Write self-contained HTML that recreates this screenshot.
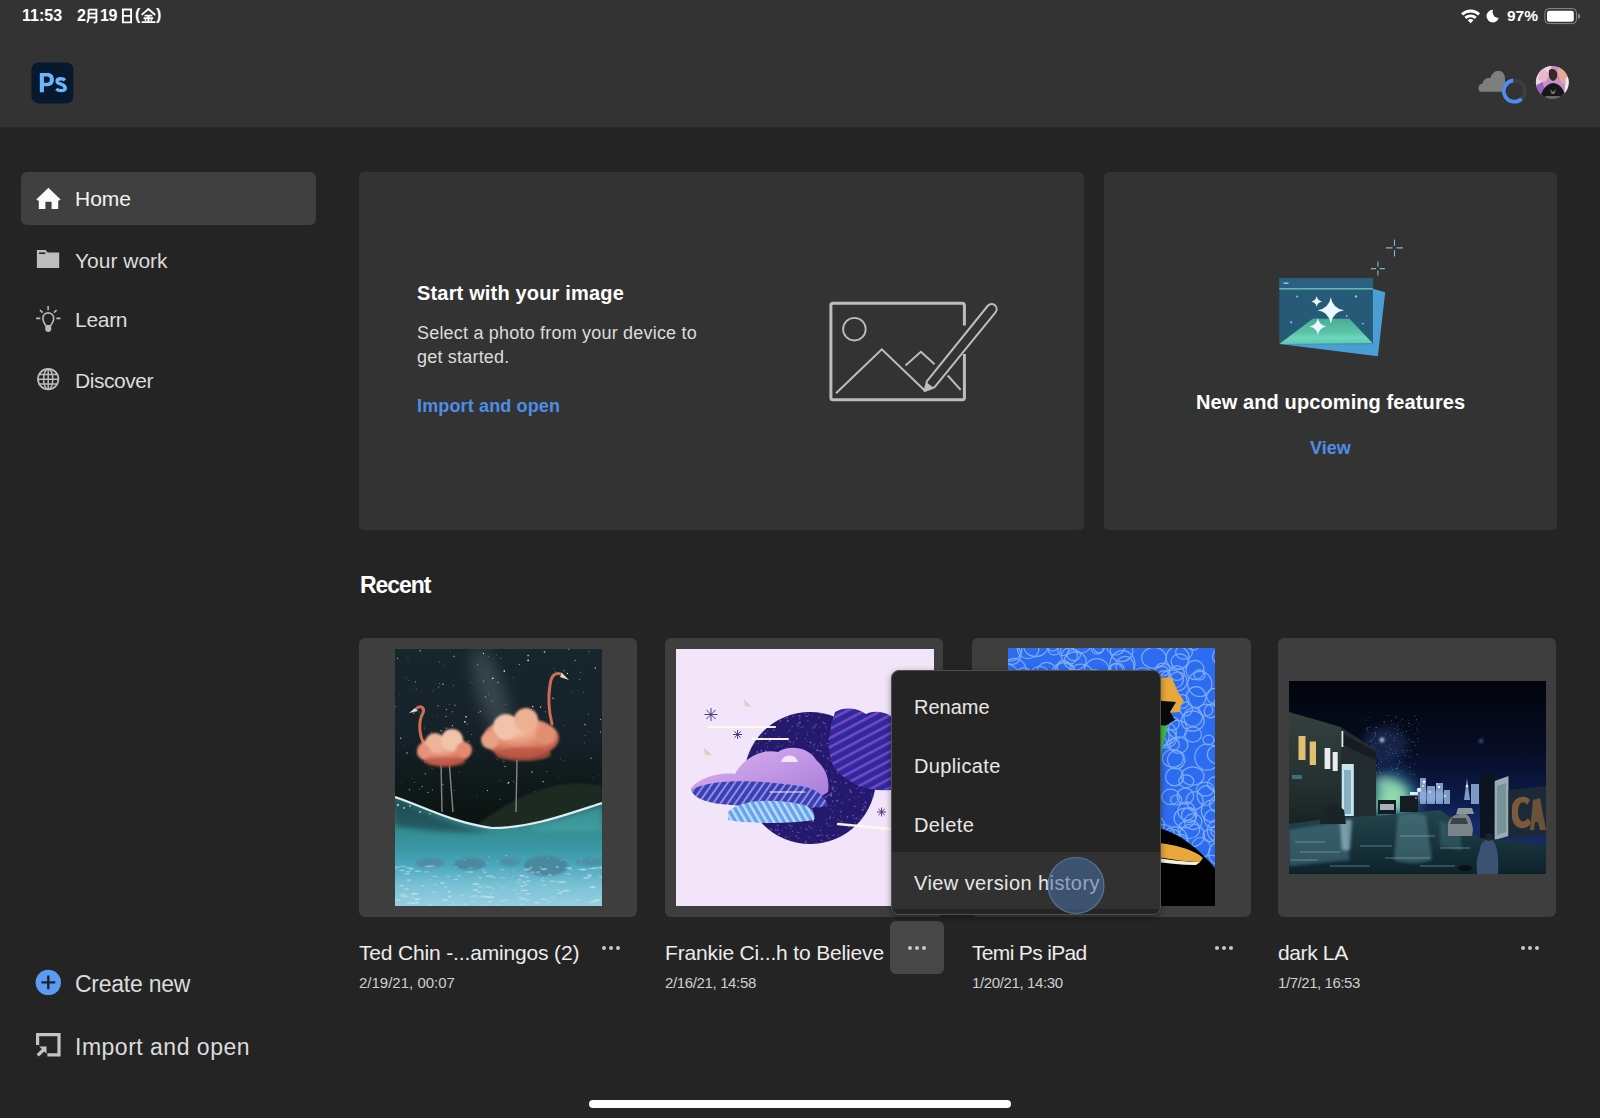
<!DOCTYPE html>
<html><head><meta charset="utf-8">
<style>
*{margin:0;padding:0;box-sizing:border-box}
html,body{width:1600px;height:1118px;overflow:hidden;background:#242424;font-family:"Liberation Sans",sans-serif;color:#e6e6e6}
.a{position:absolute}
.t{position:absolute;white-space:nowrap;line-height:1}
.card{background:#333333;border-radius:5px}
.rc{background:#3e3e3e;border-radius:6px}
.nav{font-size:21px;color:#dcdcdc}
.link{color:#4f8de6;font-weight:bold}
.dots{position:absolute;width:18px;height:4px}
.dots i{position:absolute;top:0;width:4px;height:4px;border-radius:2px;background:#c8c8c8}
</style></head><body>
<div class="a" style="left:0;top:0;width:1600px;height:126px;background:#333333"></div>
<div class="a" style="left:0;top:125px;width:1600px;height:1px;background:#383838"></div>
<div class="a" style="left:0;top:126px;width:1600px;height:1px;background:#303030"></div>
<div class="a" style="left:0;top:127px;width:1600px;height:1px;background:#282828"></div>
<!-- sidebar selected -->
<div class="a" style="left:21px;top:172px;width:295px;height:53px;background:#404040;border-radius:6px"></div>
<!-- cards -->
<div class="a card" style="left:359px;top:172px;width:725px;height:358px"></div>
<div class="a card" style="left:1104px;top:172px;width:453px;height:358px"></div>
<!-- recent cards -->
<div class="a rc" style="left:359px;top:638px;width:278px;height:279px"></div>
<div class="a rc" style="left:665px;top:638px;width:278px;height:279px"></div>
<div class="a rc" style="left:972px;top:638px;width:279px;height:279px"></div>
<div class="a rc" style="left:1278px;top:638px;width:278px;height:279px"></div>
<!-- highlighted dots button -->
<div class="a" style="left:890px;top:921px;width:54px;height:53px;background:#474747;border-radius:6px"></div>
<!-- ICONS LAYER -->
<svg class="a" style="left:0;top:0" width="1600" height="1118" viewBox="0 0 1600 1118">
 <!-- status date CJK -->
 <g stroke="#fff" stroke-width="1.9" fill="none" stroke-linecap="butt">
  <!-- 月 -->
  <path d="M88.6 9.6 V17.5 C88.6 20 88 21.6 86.9 22.6"/>
  <path d="M88.6 9.6 H96.4 V21.3 C96.4 22.2 96 22.5 95 22.5 H93.8"/>
  <path d="M88.6 13.6 H96.4 M88.6 17.5 H96.4"/>
  <!-- 日 -->
  <path d="M122.9 9.5 H131.1 V22.4 H122.9 Z M122.9 15.9 H131.1" stroke-linejoin="miter"/>
  <!-- 金 -->
  <path d="M141.6 14.9 L148.4 9.1 L155.3 14.9"/>
  <path d="M144.6 15.6 H152.3 M143.6 18.3 H153.2 M141.6 22.1 H155.4 M148.4 15.6 V22.1"/>
  <path d="M145 19.3 L146 21 M151.8 19.3 L150.8 21" stroke-width="1.4"/>
 </g>
 <!-- wifi -->
 <g fill="#fff">
  <path d="M1461.1 13.3 A13.8 13.8 0 0 1 1480.1 13.3 L1478.1 15.5 A10.8 10.8 0 0 0 1463.1 15.5 Z"/>
  <path d="M1464.4 16.8 A9.2 9.2 0 0 1 1476.8 16.8 L1474.8 19 A6.2 6.2 0 0 0 1466.4 19 Z"/>
  <path d="M1467.7 20.3 A4.4 4.4 0 0 1 1473.5 20.3 L1470.6 23.3 Z"/>
 </g>
 <!-- moon -->
 <defs><mask id="moonm"><rect x="1480" y="0" width="30" height="30" fill="#fff"/><circle cx="1498.6" cy="12" r="6" fill="#000"/></mask></defs>
 <circle cx="1492.8" cy="16.1" r="6.3" fill="#fff" mask="url(#moonm)"/>
 <!-- battery -->
 <rect x="1544.9" y="8.6" width="31.6" height="15" rx="4" fill="none" stroke="#8a8a8a" stroke-width="1"/>
 <rect x="1547" y="10.7" width="26.8" height="11" rx="2.3" fill="#fff"/>
 <path d="M1578 13.5 C1579.6 14 1580.2 15 1580.2 16.3 C1580.2 17.6 1579.6 18.6 1578 19.1 Z" fill="#8a8a8a"/>

 <!-- Ps logo -->
 <rect x="31.4" y="62.4" width="42" height="41" rx="7" fill="#07192e"/>
 <path fill="#6cb6ff" fill-rule="evenodd" d="M39.8 92.2 V73 H47.4 C51.6 73 53.9 75.6 53.9 79.6 C53.9 83.7 51.5 86.3 47.4 86.3 H43.9 V92.2 Z M43.9 76.6 V82.7 H47 C49 82.7 49.9 81.5 49.9 79.6 C49.9 77.8 49 76.6 47 76.6 Z"/>
 <path fill="none" stroke="#6cb6ff" stroke-width="3.4" d="M65 80.2 C63.8 79 62.2 78.8 60.7 78.8 C58.4 78.8 57.1 79.8 57.1 81.3 C57.1 83 58.7 83.6 61 84.2 C63.5 84.9 65.2 85.8 65.2 88.3 C65.2 90 63.6 90.6 61.2 90.6 C59.3 90.6 57.6 90.1 56.2 89"/>

 <!-- cloud -->
 <path fill="#7e7e7e" d="M1481.5 91.8 C1478.8 91.8 1478.5 89.5 1478.5 88 C1478.5 85.5 1480.3 83.7 1482.6 83.6 C1483 80.3 1485.6 78 1488.6 78 C1489.3 78 1489.9 78.1 1490.4 78.3 C1491.5 74 1494.8 70.8 1498.3 70.8 C1502.3 70.8 1505 74.2 1505 78.5 V91.8 Z"/>
 <!-- spinner -->
 <circle cx="1514.3" cy="91.1" r="10.6" fill="none" stroke="#3e3e3e" stroke-width="3.6"/>
 <path d="M1513.2 80.5 A10.6 10.6 0 1 0 1521.6 98.8" fill="none" stroke="#4b8ff0" stroke-width="3.8"/>
 <!-- avatar -->
 <defs>
  <clipPath id="avc"><circle cx="1552.3" cy="82.3" r="16.4"/></clipPath>
  <radialGradient id="avg" cx="0.5" cy="0.4" r="0.6"><stop offset="0" stop-color="#d8a0c0"/><stop offset="1" stop-color="#8a5aa0"/></radialGradient>
 </defs>
 <g clip-path="url(#avc)">
  <rect x="1535" y="65" width="36" height="36" fill="#c890c0"/>
  <path d="M1535 65 H1552 L1548 76 L1540 84 L1535 86 Z" fill="#f2d6e6"/>
  <path d="M1540 70 C1544 68 1548 70 1549 76 L1545 82 L1538 80 Z" fill="#e8b8d0"/>
  <path d="M1535 86 L1542 82 L1546 92 L1540 100 H1535 Z" fill="#9a62c0"/>
  <path d="M1558 66 C1564 68 1568 74 1569 82 L1562 84 L1558 74 Z" fill="#e4a898"/>
  <path d="M1566 78 L1570 76 V100 L1564 96 Z" fill="#f0eaf4"/>
  <path d="M1549 70 C1552 68 1556 69 1557 73 C1558 77 1556 80 1553 81 C1550 80 1548 77 1549 70 Z" fill="#3a2622"/>
  <path d="M1540 101 C1541 90 1546 84 1553 83 C1561 84 1565 90 1566 101 Z" fill="#14181c"/>
  <path d="M1550 89 L1553 92 L1556 89 L1554.5 94 H1551.5 Z" fill="#8a7050"/>
  <path d="M1546 96 L1560 96 L1562 101 H1544 Z" fill="#8a8a9a" opacity="0.7"/>
 </g>

 <!-- nav icons -->
 <path fill="#fafafa" d="M48.4 187.8 L60.6 199.4 L58.2 200.9 V209 H51.6 V201.8 H45.4 V209 H38.8 V200.9 L36.3 199.4 Z"/>
 <path fill="#bdbdbd" d="M36.9 250 H45.6 L47.7 252.5 H59.2 V268 H36.9 Z"/>
 <path d="M39 253.2 H45.4" stroke="#1e1e1e" stroke-width="1.5" fill="none"/>
 <g stroke="#bababa" stroke-width="1.6" fill="none" stroke-linecap="butt">
  <path d="M48.1 306 V310.3 M39.9 310 L42.6 312.6 M56.6 310 L54 312.6 M36.1 318.4 H40.3 M56.3 318.4 H60.5"/>
  <path d="M45.6 325.5 C44.8 323.5 42.9 322 42.9 318.4 C42.9 315 45.3 312.9 48.2 312.9 C51.1 312.9 53.7 315 53.7 318.4 C53.7 322 51.6 323.5 50.8 325.5"/>
 </g>
 <path fill="#bababa" d="M45.3 325 H51.2 V329.5 C51.2 331 49.8 332 48.2 332 C46.6 332 45.3 331 45.3 329.5 Z"/>
 <g stroke="#bdbdbd" stroke-width="1.5" fill="none">
  <circle cx="48.2" cy="379.1" r="10.2" stroke-width="1.8"/>
  <path d="M38.6 374.5 H57.8 M38 379.2 H58.4 M38.6 384 H57.8 M48.2 369 V389.3"/>
  <ellipse cx="48.2" cy="379.1" rx="4.6" ry="10.2"/>
 </g>
 <circle cx="48.3" cy="982.4" r="12.7" fill="#5b9cf0"/>
 <path d="M48.3 975.5 V989.3 M41.4 982.4 H55.2" stroke="#1b2330" stroke-width="2.4"/>
 <g fill="#c4c4c4">
  <path d="M36 1033 H60.6 V1056.5 H47.4 V1053.3 H57.4 V1036.2 H39.2 V1044.9 H36 Z"/>
  <path d="M39.2 1046.4 H46.5 V1053.7 L44.2 1051.4 L38.9 1056.6 L36.6 1054.3 L41.9 1049 Z"/>
 </g>

 <!-- card1 image icon -->
 <g stroke="#bdbdbd" fill="none">
  <path d="M964.4 325.6 V305.3 C964.4 304 963.6 303.3 962.4 303.3 H833 C831.7 303.3 830.9 304 830.9 305.3 V397.8 C830.9 399 831.7 399.8 833 399.8 H962.4 C963.6 399.8 964.4 399 964.4 397.8 V354.1" stroke-width="3"/>
  <circle cx="854.4" cy="329.2" r="11.3" stroke-width="1.8"/>
  <path d="M836 393.3 L881.8 349.4 L924.5 390.3 M905.5 365.4 L920.9 351.8 L934.6 364.2 M947.7 375.5 L960.7 389.8" stroke-width="2"/>
  <path d="M924.5 391 L927 381.2 L987.6 306 C989.6 303.6 993 303.3 995 305.2 C997.1 307 997.2 310.3 995.3 312.6 L934.6 387.2 Z" stroke-width="2" stroke-linejoin="round"/>
 </g>
 <path d="M924.5 391 L926.5 382.5 L933.5 387.5 Z" fill="#bdbdbd"/>

 <!-- features illustration -->
 <path d="M1372.9 288.8 L1385.2 292.2 L1377.9 356.2 L1279.5 344.1 Z" fill="#4a9ed6"/>
 <rect x="1279.3" y="278.3" width="93.6" height="65.8" fill="#275a77"/>
 <rect x="1279.3" y="278.3" width="93.6" height="10" fill="#2b6180"/>
 <rect x="1279.3" y="288" width="93.6" height="1.6" fill="#62b4b0"/>
 <rect x="1283.5" y="282.5" width="5" height="1.4" fill="#8fd0e8"/>
 <defs><linearGradient id="mtn" x1="0" y1="0" x2="0" y2="1"><stop offset="0" stop-color="#49ad95"/><stop offset="0.55" stop-color="#5cc3a8"/><stop offset="0.75" stop-color="#6dd6bc"/><stop offset="1" stop-color="#5ccaae"/></linearGradient></defs>
 <path d="M1312.7 318.8 H1349.5 L1372.9 343.5 L1279.3 344.1 Z" fill="url(#mtn)"/>
 <g fill="#eaf8ff">
  <path d="M1330.8 297.3 Q1332.6 308.5 1344.1 310.3 Q1332.6 312.1 1330.8 323.6 Q1329 312.1 1317.5 310.3 Q1329 308.5 1330.8 297.3 Z"/>
  <path d="M1316.7 296.1 Q1317.5 300.7 1322.1 301.5 Q1317.5 302.3 1316.7 306.9 Q1315.9 302.3 1311.3 301.5 Q1315.9 300.7 1316.7 296.1 Z"/>
  <path d="M1317.9 318.1 Q1319.1 325.4 1326.4 326.6 Q1319.1 327.8 1317.9 335.1 Q1316.7 327.8 1309.4 326.6 Q1316.7 325.4 1317.9 318.1 Z"/>
 </g>
 <g fill="#8cc8d8"><circle cx="1297.2" cy="296.4" r="1"/><circle cx="1356" cy="296.4" r="1.2"/><circle cx="1291.2" cy="322.3" r="1.1"/><circle cx="1346.7" cy="316" r="0.9"/><circle cx="1362.8" cy="323.6" r="0.9"/></g>
 <g stroke="#78bccc" stroke-width="1.1">
  <path d="M1394.5 239.4 V245.9 M1394.5 249.9 V256.4 M1386 247.9 H1392.5 M1396.5 247.9 H1403"/>
  <path d="M1377.9 261.6 V266.8 M1377.9 270.4 V275.6 M1370.9 268.6 H1376.1 M1379.7 268.6 H1384.9"/>
 </g>
</svg>
<!-- THUMBS -->
<svg class="a" style="left:395px;top:649px" width="207" height="257" viewBox="395 649 207 257">
<defs>
 <linearGradient id="t1sky" x1="0" y1="649" x2="0" y2="830" gradientUnits="userSpaceOnUse"><stop offset="0" stop-color="#17252d"/><stop offset="0.45" stop-color="#16222a"/><stop offset="0.8" stop-color="#0e1818"/><stop offset="1" stop-color="#0a1210"/></linearGradient>
 <linearGradient id="t1sea" x1="0" y1="797" x2="0" y2="906" gradientUnits="userSpaceOnUse"><stop offset="0" stop-color="#245a5e"/><stop offset="0.3" stop-color="#348c92"/><stop offset="0.48" stop-color="#3a98a6"/><stop offset="0.62" stop-color="#4aa6bc"/><stop offset="0.8" stop-color="#78c0d4"/><stop offset="1" stop-color="#96d0e0"/></linearGradient>
 <radialGradient id="t1cl" cx="0.45" cy="0.3" r="0.7"><stop offset="0" stop-color="#f6cab4"/><stop offset="0.45" stop-color="#e8967a"/><stop offset="1" stop-color="#b85040"/></radialGradient>
 <filter id="t1b1" x="-50%" y="-50%" width="200%" height="200%"><feGaussianBlur stdDeviation="1.1"/></filter>
 <filter id="t1b2" x="-50%" y="-50%" width="200%" height="200%"><feGaussianBlur stdDeviation="2.5"/></filter>
 <filter id="t1b4" x="-50%" y="-50%" width="200%" height="200%"><feGaussianBlur stdDeviation="7"/></filter>
</defs>
<rect x="395" y="649" width="207" height="257" fill="url(#t1sky)"/>
<ellipse cx="492" cy="695" rx="14" ry="50" transform="rotate(-18 492 695)" fill="#56646a" opacity="0.5" filter="url(#t1b4)"/>

<circle cx="462.0" cy="671.8" r="0.35" fill="#fff" opacity="0.44"/>
<circle cx="505.9" cy="704.2" r="0.35" fill="#fff" opacity="0.95"/>
<circle cx="439.4" cy="662.0" r="0.6" fill="#fff" opacity="0.44"/>
<circle cx="413.8" cy="713.1" r="0.8" fill="#fff" opacity="0.47"/>
<circle cx="441.2" cy="743.7" r="0.35" fill="#fff" opacity="0.75"/>
<circle cx="477.1" cy="796.4" r="0.35" fill="#fff" opacity="0.73"/>
<circle cx="422.6" cy="712.3" r="0.8" fill="#fff" opacity="0.47"/>
<circle cx="458.9" cy="772.2" r="0.4" fill="#fff" opacity="0.46"/>
<circle cx="513.2" cy="677.4" r="0.35" fill="#fff" opacity="0.73"/>
<circle cx="408.0" cy="658.0" r="0.4" fill="#fff" opacity="0.70"/>
<circle cx="505.1" cy="766.4" r="0.6" fill="#fff" opacity="0.75"/>
<circle cx="488.8" cy="694.3" r="0.4" fill="#fff" opacity="0.82"/>
<circle cx="445.5" cy="735.7" r="0.8" fill="#fff" opacity="0.70"/>
<circle cx="466.1" cy="716.8" r="0.8" fill="#fff" opacity="0.99"/>
<circle cx="419.4" cy="712.1" r="0.5" fill="#fff" opacity="0.49"/>
<circle cx="496.2" cy="654.9" r="0.35" fill="#fff" opacity="0.86"/>
<circle cx="513.6" cy="781.2" r="0.5" fill="#fff" opacity="0.60"/>
<circle cx="467.5" cy="724.0" r="0.6" fill="#fff" opacity="0.44"/>
<circle cx="414.4" cy="689.8" r="0.35" fill="#fff" opacity="0.44"/>
<circle cx="540.2" cy="746.7" r="0.6" fill="#fff" opacity="0.57"/>
<circle cx="474.9" cy="750.0" r="0.35" fill="#fff" opacity="0.96"/>
<circle cx="468.6" cy="741.2" r="0.6" fill="#fff" opacity="0.44"/>
<circle cx="554.0" cy="668.5" r="0.4" fill="#fff" opacity="0.64"/>
<circle cx="584.8" cy="724.0" r="0.4" fill="#fff" opacity="0.67"/>
<circle cx="508.7" cy="782.4" r="0.6" fill="#fff" opacity="0.92"/>
<circle cx="452.6" cy="711.7" r="0.5" fill="#fff" opacity="0.81"/>
<circle cx="473.8" cy="683.8" r="0.35" fill="#fff" opacity="0.51"/>
<circle cx="443.0" cy="684.2" r="0.6" fill="#fff" opacity="0.90"/>
<circle cx="432.7" cy="691.6" r="0.4" fill="#fff" opacity="0.65"/>
<circle cx="471.4" cy="734.5" r="0.4" fill="#fff" opacity="0.81"/>
<circle cx="501.7" cy="742.3" r="0.35" fill="#fff" opacity="0.67"/>
<circle cx="575.3" cy="792.7" r="0.8" fill="#fff" opacity="0.64"/>
<circle cx="477.6" cy="664.6" r="0.6" fill="#fff" opacity="0.44"/>
<circle cx="408.9" cy="680.5" r="0.4" fill="#fff" opacity="0.47"/>
<circle cx="519.4" cy="664.5" r="0.8" fill="#fff" opacity="0.49"/>
<circle cx="416.0" cy="703.9" r="0.35" fill="#fff" opacity="0.44"/>
<circle cx="438.0" cy="705.8" r="0.5" fill="#fff" opacity="0.97"/>
<circle cx="519.7" cy="720.6" r="0.35" fill="#fff" opacity="0.91"/>
<circle cx="600.6" cy="719.4" r="0.6" fill="#fff" opacity="0.59"/>
<circle cx="424.8" cy="762.2" r="0.5" fill="#fff" opacity="0.69"/>
<circle cx="538.3" cy="727.0" r="0.4" fill="#fff" opacity="0.97"/>
<circle cx="504.3" cy="671.1" r="0.8" fill="#fff" opacity="0.95"/>
<circle cx="551.9" cy="694.0" r="0.35" fill="#fff" opacity="0.82"/>
<circle cx="449.1" cy="704.4" r="0.4" fill="#fff" opacity="0.61"/>
<circle cx="441.1" cy="730.8" r="0.8" fill="#fff" opacity="0.60"/>
<circle cx="441.2" cy="771.5" r="0.4" fill="#fff" opacity="0.88"/>
<circle cx="564.4" cy="760.7" r="0.4" fill="#fff" opacity="0.52"/>
<circle cx="497.0" cy="759.4" r="0.35" fill="#fff" opacity="0.87"/>
<circle cx="492.8" cy="678.2" r="0.8" fill="#fff" opacity="0.97"/>
<circle cx="487.6" cy="790.5" r="0.5" fill="#fff" opacity="0.97"/>
<circle cx="470.5" cy="682.3" r="0.4" fill="#fff" opacity="0.68"/>
<circle cx="464.9" cy="721.9" r="0.8" fill="#fff" opacity="0.90"/>
<circle cx="494.3" cy="747.6" r="0.35" fill="#fff" opacity="0.90"/>
<circle cx="419.8" cy="707.7" r="0.4" fill="#fff" opacity="0.69"/>
<circle cx="432.0" cy="768.2" r="0.5" fill="#fff" opacity="0.45"/>
<circle cx="590.9" cy="758.0" r="0.6" fill="#fff" opacity="0.64"/>
<circle cx="591.0" cy="758.4" r="0.4" fill="#fff" opacity="1.00"/>
<circle cx="400.7" cy="738.2" r="0.6" fill="#fff" opacity="0.88"/>
<circle cx="425.3" cy="773.8" r="0.6" fill="#fff" opacity="0.79"/>
<circle cx="467.5" cy="731.8" r="0.4" fill="#fff" opacity="0.41"/>
<circle cx="560.5" cy="758.7" r="0.35" fill="#fff" opacity="0.72"/>
<circle cx="588.3" cy="714.5" r="0.4" fill="#fff" opacity="0.90"/>
<circle cx="438.7" cy="687.0" r="0.5" fill="#fff" opacity="0.70"/>
<circle cx="553.1" cy="698.2" r="0.8" fill="#fff" opacity="0.65"/>
<circle cx="422.1" cy="786.4" r="0.5" fill="#fff" opacity="0.94"/>
<circle cx="532.1" cy="772.1" r="0.8" fill="#fff" opacity="0.65"/>
<circle cx="585.0" cy="724.7" r="0.8" fill="#fff" opacity="0.49"/>
<circle cx="500.7" cy="780.8" r="0.4" fill="#fff" opacity="0.77"/>
<circle cx="555.6" cy="671.6" r="0.4" fill="#fff" opacity="0.68"/>
<circle cx="545.1" cy="733.0" r="0.5" fill="#fff" opacity="0.81"/>
<circle cx="504.9" cy="721.9" r="0.35" fill="#fff" opacity="0.93"/>
<circle cx="406.8" cy="677.9" r="0.35" fill="#fff" opacity="0.86"/>
<circle cx="500.1" cy="733.8" r="0.35" fill="#fff" opacity="0.67"/>
<circle cx="521.8" cy="725.3" r="0.8" fill="#fff" opacity="0.52"/>
<circle cx="452.4" cy="725.7" r="0.6" fill="#fff" opacity="0.70"/>
<circle cx="446.3" cy="728.0" r="0.5" fill="#fff" opacity="0.95"/>
<circle cx="579.8" cy="679.6" r="0.6" fill="#fff" opacity="0.48"/>
<circle cx="420.2" cy="715.8" r="0.35" fill="#fff" opacity="0.80"/>
<circle cx="483.7" cy="681.1" r="0.5" fill="#fff" opacity="0.87"/>
<circle cx="580.7" cy="672.3" r="0.5" fill="#fff" opacity="0.49"/>
<circle cx="577.7" cy="795.1" r="0.4" fill="#fff" opacity="0.85"/>
<circle cx="414.5" cy="782.6" r="0.4" fill="#fff" opacity="0.99"/>
<circle cx="567.3" cy="673.4" r="0.6" fill="#fff" opacity="1.00"/>
<circle cx="478.6" cy="712.6" r="0.5" fill="#fff" opacity="0.59"/>
<circle cx="544.5" cy="651.9" r="0.8" fill="#fff" opacity="0.68"/>
<circle cx="540.6" cy="707.0" r="0.8" fill="#fff" opacity="0.77"/>
<circle cx="501.0" cy="658.7" r="0.4" fill="#fff" opacity="0.98"/>
<circle cx="416.7" cy="689.1" r="0.35" fill="#fff" opacity="0.94"/>
<circle cx="432.6" cy="763.1" r="0.6" fill="#fff" opacity="0.91"/>
<circle cx="534.9" cy="791.8" r="0.6" fill="#fff" opacity="0.49"/>
<circle cx="585.3" cy="735.2" r="0.5" fill="#fff" opacity="0.45"/>
<circle cx="406.9" cy="752.9" r="0.6" fill="#fff" opacity="0.94"/>
<circle cx="450.7" cy="651.5" r="0.35" fill="#fff" opacity="0.88"/>
<circle cx="412.3" cy="778.3" r="0.35" fill="#fff" opacity="0.56"/>
<circle cx="420.2" cy="650.7" r="0.8" fill="#fff" opacity="0.65"/>
<circle cx="584.5" cy="742.9" r="0.35" fill="#fff" opacity="0.72"/>
<circle cx="444.4" cy="665.5" r="0.4" fill="#fff" opacity="0.56"/>
<circle cx="432.5" cy="789.8" r="0.5" fill="#fff" opacity="0.72"/>
<circle cx="437.6" cy="716.3" r="0.4" fill="#fff" opacity="0.56"/>
<circle cx="561.4" cy="799.2" r="0.35" fill="#fff" opacity="0.41"/>
<circle cx="546.7" cy="732.2" r="0.4" fill="#fff" opacity="0.71"/>
<circle cx="445.9" cy="716.5" r="0.6" fill="#fff" opacity="0.79"/>
<circle cx="508.0" cy="783.2" r="0.8" fill="#fff" opacity="0.58"/>
<circle cx="439.5" cy="683.7" r="0.4" fill="#fff" opacity="0.90"/>
<circle cx="541.3" cy="745.0" r="0.6" fill="#fff" opacity="0.99"/>
<circle cx="598.2" cy="775.4" r="0.35" fill="#fff" opacity="0.44"/>
<circle cx="548.4" cy="687.6" r="0.4" fill="#fff" opacity="0.43"/>
<circle cx="532.7" cy="706.5" r="0.8" fill="#fff" opacity="0.80"/>
<circle cx="453.4" cy="685.6" r="0.5" fill="#fff" opacity="0.43"/>
<circle cx="433.4" cy="689.6" r="0.35" fill="#fff" opacity="0.56"/>
<circle cx="594.1" cy="795.9" r="0.8" fill="#fff" opacity="0.59"/>
<circle cx="402.1" cy="782.2" r="0.4" fill="#fff" opacity="0.61"/>
<circle cx="395.2" cy="706.6" r="0.6" fill="#fff" opacity="0.57"/>
<circle cx="530.8" cy="686.5" r="0.35" fill="#fff" opacity="0.45"/>
<circle cx="564.1" cy="670.7" r="0.8" fill="#fff" opacity="0.43"/>
<circle cx="399.7" cy="694.9" r="0.4" fill="#fff" opacity="0.45"/>
<circle cx="593.2" cy="777.8" r="0.4" fill="#fff" opacity="0.79"/>
<circle cx="543.2" cy="781.7" r="0.6" fill="#fff" opacity="0.86"/>
<circle cx="544.2" cy="723.6" r="0.5" fill="#fff" opacity="0.83"/>
<circle cx="528.1" cy="655.6" r="0.8" fill="#fff" opacity="0.78"/>
<circle cx="546.9" cy="771.6" r="0.4" fill="#fff" opacity="0.95"/>
<circle cx="550.8" cy="734.8" r="0.35" fill="#fff" opacity="0.90"/>
<circle cx="515.9" cy="783.8" r="0.4" fill="#fff" opacity="0.45"/>
<circle cx="403.7" cy="745.2" r="0.35" fill="#fff" opacity="0.63"/>
<circle cx="488.4" cy="656.7" r="0.35" fill="#fff" opacity="0.78"/>
<circle cx="535.9" cy="722.9" r="0.35" fill="#fff" opacity="0.67"/>
<circle cx="409.5" cy="789.8" r="0.8" fill="#fff" opacity="0.46"/>
<circle cx="503.9" cy="761.6" r="0.6" fill="#fff" opacity="0.55"/>
<circle cx="410.4" cy="689.1" r="0.4" fill="#fff" opacity="0.54"/>
<circle cx="529.5" cy="718.5" r="0.6" fill="#fff" opacity="0.45"/>
<circle cx="583.5" cy="692.4" r="0.35" fill="#fff" opacity="0.77"/>
<circle cx="528.1" cy="660.7" r="0.4" fill="#fff" opacity="0.60"/>
<circle cx="529.9" cy="753.6" r="0.8" fill="#fff" opacity="0.74"/>
<circle cx="397.6" cy="658.2" r="0.5" fill="#fff" opacity="0.98"/>
<circle cx="415.6" cy="681.9" r="0.6" fill="#fff" opacity="0.57"/>
<circle cx="501.9" cy="719.2" r="0.6" fill="#fff" opacity="0.86"/>
<circle cx="600.6" cy="731.9" r="0.5" fill="#fff" opacity="0.99"/>
<circle cx="588.8" cy="651.6" r="0.6" fill="#fff" opacity="0.45"/>
<circle cx="499.9" cy="799.2" r="0.5" fill="#fff" opacity="0.63"/>
<circle cx="584.7" cy="789.5" r="0.35" fill="#fff" opacity="0.75"/>
<circle cx="424.3" cy="728.1" r="0.5" fill="#fff" opacity="0.48"/>
<circle cx="564.8" cy="725.8" r="0.35" fill="#fff" opacity="0.82"/>
<circle cx="442.9" cy="784.6" r="0.6" fill="#fff" opacity="0.64"/>
<circle cx="427.9" cy="792.4" r="0.6" fill="#fff" opacity="0.64"/>
<circle cx="545.5" cy="711.8" r="0.6" fill="#fff" opacity="0.59"/>
<circle cx="568.9" cy="649.3" r="0.5" fill="#fff" opacity="0.90"/>
<circle cx="419.8" cy="788.9" r="0.35" fill="#fff" opacity="0.94"/>
<circle cx="455.0" cy="705.2" r="0.6" fill="#fff" opacity="0.63"/>
<circle cx="575.1" cy="660.5" r="0.6" fill="#fff" opacity="0.85"/>
<circle cx="571.8" cy="691.4" r="0.35" fill="#fff" opacity="0.90"/>
<circle cx="454.1" cy="790.3" r="0.4" fill="#fff" opacity="0.98"/>
<circle cx="485.3" cy="696.7" r="0.5" fill="#fff" opacity="0.87"/>
<circle cx="483.5" cy="653.4" r="0.6" fill="#fff" opacity="0.95"/>
<circle cx="589.7" cy="731.9" r="0.35" fill="#fff" opacity="0.43"/>
<circle cx="546.6" cy="717.1" r="0.4" fill="#fff" opacity="0.79"/>
<circle cx="454.2" cy="656.4" r="0.8" fill="#fff" opacity="0.48"/>
<circle cx="492.7" cy="700.9" r="0.5" fill="#fff" opacity="0.55"/>
<circle cx="547.9" cy="747.6" r="0.6" fill="#fff" opacity="0.79"/>
<circle cx="457.3" cy="733.2" r="0.6" fill="#fff" opacity="0.47"/>
<circle cx="528.1" cy="660.4" r="0.8" fill="#fff" opacity="0.94"/>
<circle cx="497.9" cy="682.2" r="0.5" fill="#fff" opacity="1.00"/>
<circle cx="488.1" cy="670.1" r="0.4" fill="#fff" opacity="0.55"/>
<circle cx="431.2" cy="732.9" r="0.5" fill="#fff" opacity="0.54"/>
<circle cx="448.5" cy="735.0" r="0.35" fill="#fff" opacity="0.85"/>
<circle cx="480.4" cy="711.5" r="0.8" fill="#fff" opacity="0.53"/>
<circle cx="450.9" cy="762.6" r="0.6" fill="#fff" opacity="0.57"/>
<circle cx="595.3" cy="668.0" r="0.8" fill="#fff" opacity="0.72"/>
<circle cx="558.6" cy="777.1" r="0.35" fill="#fff" opacity="0.56"/>
<circle cx="446.4" cy="709.4" r="0.6" fill="#fff" opacity="0.66"/>
<circle cx="459.6" cy="772.0" r="0.35" fill="#fff" opacity="0.48"/>

<path d="M480 822 C505 805 530 790 560 785 C580 782 595 784 602 786 V830 H480 Z" fill="#1c2a22" filter="url(#t1b1)"/>
<path d="M395 797 C420 805 450 822 492 828 C530 828 565 815 602 803 V906 H395 Z" fill="url(#t1sea)"/>
<path d="M395 800 C420 810 450 826 492 831 C470 834 430 832 395 826 Z" fill="#14383e" opacity="0.55" filter="url(#t1b2)"/>
<path d="M530 826 C555 822 580 812 602 806 V830 C580 832 555 832 530 830 Z" fill="#4ab0b0" opacity="0.5" filter="url(#t1b2)"/>
<path d="M395 797 C420 805 450 822 492 828 C530 828 565 815 602 803" fill="none" stroke="#dceeee" stroke-width="2.2"/>
<g fill="#d8eef0" opacity="0.7"><circle cx="398" cy="805" r="1.2"/><circle cx="404" cy="808" r="1"/><circle cx="410" cy="806" r="0.9"/><circle cx="420" cy="812" r="1"/><circle cx="430" cy="814" r="0.8"/></g>
<g filter="url(#t1b1)" opacity="0.85">
 <ellipse cx="430" cy="863" rx="14" ry="5" fill="#4f8aa0"/>
 <ellipse cx="470" cy="864" rx="16" ry="6" fill="#4a8498"/>
 <ellipse cx="510" cy="862" rx="10" ry="4" fill="#508ca0"/>
 <ellipse cx="546" cy="866" rx="22" ry="10" fill="#4a8498"/>
 <ellipse cx="590" cy="862" rx="14" ry="4" fill="#508ca0"/>
</g>

<ellipse cx="483.0" cy="896.5" rx="3.5" ry="1.2" fill="#d4f0f6" opacity="0.37"/>
<ellipse cx="410.1" cy="903.2" rx="3.8" ry="0.9" fill="#d4f0f6" opacity="0.36"/>
<ellipse cx="487.9" cy="897.3" rx="2.1" ry="0.7" fill="#d4f0f6" opacity="0.54"/>
<ellipse cx="417.5" cy="899.0" rx="3.3" ry="1.1" fill="#d4f0f6" opacity="0.51"/>
<ellipse cx="412.6" cy="897.1" rx="1.5" ry="0.7" fill="#d4f0f6" opacity="0.40"/>
<ellipse cx="402.8" cy="894.6" rx="3.9" ry="1.0" fill="#d4f0f6" opacity="0.38"/>
<ellipse cx="485.5" cy="896.6" rx="1.7" ry="0.8" fill="#d4f0f6" opacity="0.53"/>
<ellipse cx="434.7" cy="876.4" rx="3.5" ry="0.6" fill="#d4f0f6" opacity="0.39"/>
<ellipse cx="601.2" cy="877.1" rx="2.3" ry="1.1" fill="#d4f0f6" opacity="0.28"/>
<ellipse cx="503.9" cy="887.9" rx="1.6" ry="0.8" fill="#d4f0f6" opacity="0.43"/>
<ellipse cx="406.4" cy="873.8" rx="3.7" ry="1.0" fill="#d4f0f6" opacity="0.23"/>
<ellipse cx="442.2" cy="883.0" rx="2.4" ry="0.9" fill="#d4f0f6" opacity="0.44"/>
<ellipse cx="543.7" cy="880.5" rx="2.5" ry="0.6" fill="#d4f0f6" opacity="0.30"/>
<ellipse cx="569.9" cy="868.7" rx="2.7" ry="0.7" fill="#d4f0f6" opacity="0.47"/>
<ellipse cx="435.1" cy="884.6" rx="2.2" ry="1.1" fill="#d4f0f6" opacity="0.24"/>
<ellipse cx="524.1" cy="890.4" rx="3.7" ry="0.9" fill="#d4f0f6" opacity="0.52"/>
<ellipse cx="406.7" cy="889.8" rx="3.8" ry="0.6" fill="#d4f0f6" opacity="0.21"/>
<ellipse cx="518.4" cy="882.6" rx="3.3" ry="0.7" fill="#d4f0f6" opacity="0.36"/>
<ellipse cx="542.4" cy="878.6" rx="1.8" ry="0.6" fill="#d4f0f6" opacity="0.26"/>
<ellipse cx="434.5" cy="892.1" rx="2.8" ry="0.9" fill="#d4f0f6" opacity="0.31"/>
<ellipse cx="545.2" cy="899.6" rx="4.0" ry="0.9" fill="#d4f0f6" opacity="0.24"/>
<ellipse cx="411.2" cy="869.2" rx="2.6" ry="1.1" fill="#d4f0f6" opacity="0.40"/>
<ellipse cx="552.1" cy="881.2" rx="3.4" ry="0.8" fill="#d4f0f6" opacity="0.48"/>
<ellipse cx="413.2" cy="894.2" rx="2.0" ry="0.9" fill="#d4f0f6" opacity="0.36"/>
<ellipse cx="461.9" cy="895.5" rx="2.7" ry="1.0" fill="#d4f0f6" opacity="0.29"/>
<ellipse cx="524.5" cy="882.2" rx="2.4" ry="0.9" fill="#d4f0f6" opacity="0.48"/>
<ellipse cx="407.8" cy="873.8" rx="1.7" ry="1.0" fill="#d4f0f6" opacity="0.33"/>
<ellipse cx="464.3" cy="904.2" rx="1.6" ry="1.0" fill="#d4f0f6" opacity="0.44"/>
<ellipse cx="586.3" cy="877.9" rx="3.3" ry="1.0" fill="#d4f0f6" opacity="0.48"/>
<ellipse cx="590.9" cy="868.6" rx="3.6" ry="0.7" fill="#d4f0f6" opacity="0.45"/>
<ellipse cx="491.4" cy="897.1" rx="3.5" ry="1.1" fill="#d4f0f6" opacity="0.49"/>
<ellipse cx="422.5" cy="885.9" rx="1.5" ry="1.2" fill="#d4f0f6" opacity="0.31"/>
<ellipse cx="538.3" cy="872.1" rx="2.1" ry="1.1" fill="#d4f0f6" opacity="0.36"/>
<ellipse cx="557.3" cy="889.8" rx="2.8" ry="0.8" fill="#d4f0f6" opacity="0.26"/>
<ellipse cx="479.4" cy="892.0" rx="2.7" ry="0.9" fill="#d4f0f6" opacity="0.26"/>
<ellipse cx="483.3" cy="870.2" rx="1.7" ry="1.0" fill="#d4f0f6" opacity="0.27"/>
<ellipse cx="482.2" cy="905.5" rx="3.9" ry="0.7" fill="#d4f0f6" opacity="0.25"/>
<ellipse cx="490.4" cy="901.7" rx="2.1" ry="0.9" fill="#d4f0f6" opacity="0.47"/>
<ellipse cx="552.2" cy="897.2" rx="2.2" ry="0.8" fill="#d4f0f6" opacity="0.29"/>
<ellipse cx="447.6" cy="876.4" rx="2.6" ry="0.7" fill="#d4f0f6" opacity="0.28"/>
<ellipse cx="453.2" cy="902.3" rx="2.0" ry="0.6" fill="#d4f0f6" opacity="0.29"/>
<ellipse cx="445.9" cy="887.1" rx="3.1" ry="0.7" fill="#d4f0f6" opacity="0.36"/>
<ellipse cx="402.7" cy="866.2" rx="3.7" ry="0.7" fill="#d4f0f6" opacity="0.36"/>
<ellipse cx="472.4" cy="901.1" rx="2.1" ry="0.6" fill="#d4f0f6" opacity="0.41"/>
<ellipse cx="566.4" cy="873.8" rx="1.7" ry="0.9" fill="#d4f0f6" opacity="0.26"/>
<ellipse cx="519.8" cy="897.0" rx="3.2" ry="0.6" fill="#d4f0f6" opacity="0.42"/>
<ellipse cx="541.9" cy="880.0" rx="1.6" ry="0.8" fill="#d4f0f6" opacity="0.22"/>
<ellipse cx="602.0" cy="867.5" rx="3.3" ry="1.1" fill="#d4f0f6" opacity="0.49"/>
<ellipse cx="564.5" cy="882.4" rx="2.4" ry="1.0" fill="#d4f0f6" opacity="0.23"/>
<ellipse cx="401.5" cy="885.8" rx="2.7" ry="0.8" fill="#d4f0f6" opacity="0.48"/>
<ellipse cx="532.5" cy="872.2" rx="2.8" ry="1.0" fill="#d4f0f6" opacity="0.34"/>
<ellipse cx="451.1" cy="905.5" rx="3.2" ry="0.9" fill="#d4f0f6" opacity="0.22"/>
<ellipse cx="549.3" cy="901.3" rx="2.5" ry="0.6" fill="#d4f0f6" opacity="0.47"/>
<ellipse cx="561.1" cy="891.8" rx="2.5" ry="0.8" fill="#d4f0f6" opacity="0.53"/>
<ellipse cx="484.9" cy="872.3" rx="1.8" ry="0.7" fill="#d4f0f6" opacity="0.40"/>
<ellipse cx="470.5" cy="896.9" rx="1.8" ry="0.6" fill="#d4f0f6" opacity="0.25"/>
<ellipse cx="561.9" cy="881.9" rx="2.9" ry="1.2" fill="#d4f0f6" opacity="0.46"/>
<ellipse cx="430.5" cy="879.9" rx="1.9" ry="0.7" fill="#d4f0f6" opacity="0.22"/>
<ellipse cx="474.4" cy="896.1" rx="3.5" ry="1.1" fill="#d4f0f6" opacity="0.31"/>
<ellipse cx="568.3" cy="867.7" rx="3.8" ry="0.8" fill="#d4f0f6" opacity="0.41"/>
<ellipse cx="526.7" cy="869.5" rx="3.3" ry="1.0" fill="#d4f0f6" opacity="0.51"/>
<ellipse cx="527.5" cy="900.3" rx="3.1" ry="1.0" fill="#d4f0f6" opacity="0.27"/>
<ellipse cx="492.9" cy="888.6" rx="1.6" ry="1.2" fill="#d4f0f6" opacity="0.25"/>
<ellipse cx="469.4" cy="872.0" rx="3.9" ry="1.1" fill="#d4f0f6" opacity="0.27"/>
<ellipse cx="578.0" cy="899.7" rx="3.2" ry="1.0" fill="#d4f0f6" opacity="0.31"/>
<ellipse cx="475.7" cy="884.2" rx="3.6" ry="1.1" fill="#d4f0f6" opacity="0.43"/>
<ellipse cx="458.8" cy="876.0" rx="2.5" ry="0.8" fill="#d4f0f6" opacity="0.38"/>
<ellipse cx="432.0" cy="866.1" rx="4.0" ry="0.9" fill="#d4f0f6" opacity="0.36"/>
<ellipse cx="523.0" cy="898.8" rx="3.6" ry="1.1" fill="#d4f0f6" opacity="0.34"/>
<ellipse cx="408.9" cy="880.3" rx="2.4" ry="1.1" fill="#d4f0f6" opacity="0.38"/>
<ellipse cx="531.0" cy="867.6" rx="1.8" ry="1.2" fill="#d4f0f6" opacity="0.31"/>
<ellipse cx="544.1" cy="869.2" rx="3.4" ry="1.1" fill="#d4f0f6" opacity="0.43"/>
<ellipse cx="557.3" cy="867.0" rx="1.7" ry="1.0" fill="#d4f0f6" opacity="0.44"/>
<ellipse cx="417.7" cy="871.3" rx="3.7" ry="0.8" fill="#d4f0f6" opacity="0.48"/>
<ellipse cx="559.6" cy="893.4" rx="3.3" ry="0.7" fill="#d4f0f6" opacity="0.49"/>
<ellipse cx="521.4" cy="876.1" rx="2.3" ry="1.0" fill="#d4f0f6" opacity="0.52"/>
<ellipse cx="489.5" cy="876.2" rx="3.9" ry="0.9" fill="#d4f0f6" opacity="0.41"/>
<ellipse cx="522.5" cy="875.5" rx="2.4" ry="0.7" fill="#d4f0f6" opacity="0.34"/>
<ellipse cx="526.8" cy="877.1" rx="2.3" ry="0.8" fill="#d4f0f6" opacity="0.48"/>
<ellipse cx="449.7" cy="896.7" rx="1.6" ry="1.1" fill="#d4f0f6" opacity="0.54"/>
<ellipse cx="488.8" cy="886.9" rx="3.2" ry="1.1" fill="#d4f0f6" opacity="0.29"/>
<ellipse cx="505.9" cy="900.3" rx="3.3" ry="0.8" fill="#d4f0f6" opacity="0.33"/>
<ellipse cx="471.4" cy="871.8" rx="2.3" ry="0.6" fill="#d4f0f6" opacity="0.28"/>
<ellipse cx="522.4" cy="904.3" rx="2.2" ry="0.9" fill="#d4f0f6" opacity="0.31"/>
<ellipse cx="595.0" cy="900.8" rx="3.8" ry="1.1" fill="#d4f0f6" opacity="0.46"/>
<ellipse cx="549.7" cy="874.9" rx="2.2" ry="1.0" fill="#d4f0f6" opacity="0.35"/>
<ellipse cx="470.4" cy="867.9" rx="2.7" ry="1.0" fill="#d4f0f6" opacity="0.22"/>
<ellipse cx="406.3" cy="888.7" rx="2.3" ry="0.9" fill="#d4f0f6" opacity="0.39"/>
<ellipse cx="480.5" cy="878.0" rx="1.8" ry="0.8" fill="#d4f0f6" opacity="0.49"/>
<ellipse cx="427.8" cy="866.6" rx="3.5" ry="1.0" fill="#d4f0f6" opacity="0.36"/>
<ellipse cx="408.2" cy="871.8" rx="3.2" ry="0.8" fill="#d4f0f6" opacity="0.48"/>
<ellipse cx="595.2" cy="868.2" rx="3.6" ry="1.1" fill="#d4f0f6" opacity="0.41"/>
<ellipse cx="514.7" cy="890.1" rx="2.8" ry="0.9" fill="#d4f0f6" opacity="0.26"/>
<ellipse cx="395.1" cy="868.5" rx="1.6" ry="0.7" fill="#d4f0f6" opacity="0.26"/>
<ellipse cx="583.7" cy="870.2" rx="3.0" ry="1.0" fill="#d4f0f6" opacity="0.27"/>
<ellipse cx="480.5" cy="886.7" rx="3.1" ry="1.0" fill="#d4f0f6" opacity="0.35"/>
<ellipse cx="521.9" cy="886.3" rx="1.7" ry="1.0" fill="#d4f0f6" opacity="0.55"/>
<ellipse cx="544.9" cy="885.1" rx="2.8" ry="0.8" fill="#d4f0f6" opacity="0.35"/>
<ellipse cx="583.8" cy="869.2" rx="3.1" ry="0.7" fill="#d4f0f6" opacity="0.55"/>
<ellipse cx="449.1" cy="891.8" rx="1.8" ry="1.1" fill="#d4f0f6" opacity="0.52"/>
<ellipse cx="590.2" cy="876.5" rx="1.6" ry="1.0" fill="#d4f0f6" opacity="0.44"/>
<ellipse cx="536.9" cy="902.7" rx="3.9" ry="0.8" fill="#d4f0f6" opacity="0.52"/>
<ellipse cx="580.1" cy="869.4" rx="2.8" ry="0.7" fill="#d4f0f6" opacity="0.52"/>
<ellipse cx="569.2" cy="874.1" rx="1.9" ry="1.1" fill="#d4f0f6" opacity="0.27"/>
<ellipse cx="475.5" cy="890.0" rx="2.4" ry="1.1" fill="#d4f0f6" opacity="0.52"/>
<ellipse cx="598.2" cy="899.7" rx="2.8" ry="0.9" fill="#d4f0f6" opacity="0.39"/>
<ellipse cx="396.3" cy="867.1" rx="3.9" ry="0.7" fill="#d4f0f6" opacity="0.51"/>
<ellipse cx="558.4" cy="881.7" rx="3.0" ry="0.9" fill="#d4f0f6" opacity="0.26"/>
<ellipse cx="401.8" cy="870.5" rx="3.1" ry="0.7" fill="#d4f0f6" opacity="0.54"/>
<ellipse cx="540.1" cy="867.2" rx="1.8" ry="1.0" fill="#d4f0f6" opacity="0.21"/>
<ellipse cx="409.0" cy="867.9" rx="3.6" ry="1.1" fill="#d4f0f6" opacity="0.27"/>
<ellipse cx="592.6" cy="887.4" rx="3.2" ry="1.1" fill="#d4f0f6" opacity="0.46"/>
<ellipse cx="542.2" cy="881.4" rx="2.1" ry="0.7" fill="#d4f0f6" opacity="0.21"/>
<ellipse cx="591.5" cy="902.4" rx="3.4" ry="0.7" fill="#d4f0f6" opacity="0.46"/>
<ellipse cx="525.9" cy="885.1" rx="1.8" ry="1.1" fill="#d4f0f6" opacity="0.43"/>
<ellipse cx="456.0" cy="879.5" rx="2.2" ry="0.8" fill="#d4f0f6" opacity="0.53"/>
<ellipse cx="405.0" cy="896.4" rx="3.8" ry="1.1" fill="#d4f0f6" opacity="0.41"/>
<ellipse cx="493.5" cy="877.5" rx="3.4" ry="1.1" fill="#d4f0f6" opacity="0.21"/>
<ellipse cx="502.4" cy="869.9" rx="2.7" ry="0.6" fill="#d4f0f6" opacity="0.40"/>
<ellipse cx="542.9" cy="899.1" rx="2.9" ry="0.8" fill="#d4f0f6" opacity="0.35"/>
<ellipse cx="503.4" cy="877.5" rx="3.4" ry="0.6" fill="#d4f0f6" opacity="0.32"/>
<ellipse cx="414.8" cy="893.8" rx="3.6" ry="1.2" fill="#d4f0f6" opacity="0.41"/>
<ellipse cx="593.1" cy="886.6" rx="2.9" ry="0.7" fill="#d4f0f6" opacity="0.49"/>
<ellipse cx="589.2" cy="875.3" rx="1.9" ry="1.2" fill="#d4f0f6" opacity="0.47"/>
<ellipse cx="496.5" cy="905.6" rx="2.9" ry="0.7" fill="#d4f0f6" opacity="0.31"/>
<ellipse cx="414.7" cy="903.1" rx="3.7" ry="1.0" fill="#d4f0f6" opacity="0.35"/>
<ellipse cx="528.7" cy="880.9" rx="2.3" ry="0.9" fill="#d4f0f6" opacity="0.39"/>
<ellipse cx="430.4" cy="905.3" rx="3.1" ry="1.2" fill="#d4f0f6" opacity="0.24"/>
<ellipse cx="518.0" cy="893.6" rx="3.0" ry="0.6" fill="#d4f0f6" opacity="0.40"/>
<ellipse cx="503.0" cy="900.7" rx="2.6" ry="0.9" fill="#d4f0f6" opacity="0.31"/>
<ellipse cx="490.9" cy="893.6" rx="2.1" ry="0.7" fill="#d4f0f6" opacity="0.32"/>
<ellipse cx="528.0" cy="893.9" rx="2.8" ry="0.8" fill="#d4f0f6" opacity="0.46"/>
<ellipse cx="566.1" cy="890.7" rx="3.3" ry="1.2" fill="#d4f0f6" opacity="0.45"/>
<ellipse cx="519.8" cy="879.9" rx="2.1" ry="1.2" fill="#d4f0f6" opacity="0.29"/>
<ellipse cx="592.7" cy="905.8" rx="1.9" ry="1.0" fill="#d4f0f6" opacity="0.27"/>
<ellipse cx="426.2" cy="871.9" rx="2.3" ry="0.8" fill="#d4f0f6" opacity="0.30"/>
<ellipse cx="417.6" cy="902.5" rx="2.2" ry="1.1" fill="#d4f0f6" opacity="0.36"/>
<ellipse cx="397.6" cy="900.2" rx="2.6" ry="0.7" fill="#d4f0f6" opacity="0.54"/>
<ellipse cx="456.3" cy="866.9" rx="2.1" ry="1.0" fill="#d4f0f6" opacity="0.20"/>
<ellipse cx="445.2" cy="900.1" rx="3.3" ry="1.0" fill="#d4f0f6" opacity="0.43"/>
<circle cx="572.3" cy="870.4" r="0.7" fill="#a8d0dc" opacity="0.56"/>
<circle cx="578.0" cy="869.8" r="0.7" fill="#a8d0dc" opacity="0.53"/>
<circle cx="461.1" cy="859.2" r="0.7" fill="#a8d0dc" opacity="0.35"/>
<circle cx="497.9" cy="861.0" r="0.7" fill="#a8d0dc" opacity="0.58"/>
<circle cx="581.1" cy="860.6" r="0.7" fill="#a8d0dc" opacity="0.46"/>
<circle cx="548.3" cy="858.6" r="0.7" fill="#a8d0dc" opacity="0.64"/>
<circle cx="506.9" cy="855.5" r="0.7" fill="#a8d0dc" opacity="0.64"/>
<circle cx="513.3" cy="870.2" r="0.7" fill="#a8d0dc" opacity="0.65"/>
<circle cx="581.0" cy="862.5" r="0.7" fill="#a8d0dc" opacity="0.30"/>
<circle cx="569.7" cy="875.9" r="0.7" fill="#a8d0dc" opacity="0.34"/>
<circle cx="465.2" cy="860.0" r="0.7" fill="#a8d0dc" opacity="0.59"/>
<circle cx="591.2" cy="859.6" r="0.7" fill="#a8d0dc" opacity="0.44"/>
<circle cx="572.5" cy="865.5" r="0.7" fill="#a8d0dc" opacity="0.38"/>
<circle cx="505.6" cy="855.4" r="0.7" fill="#a8d0dc" opacity="0.62"/>
<circle cx="486.6" cy="862.9" r="0.7" fill="#a8d0dc" opacity="0.60"/>
<circle cx="502.2" cy="877.8" r="0.7" fill="#a8d0dc" opacity="0.37"/>
<circle cx="512.5" cy="876.5" r="0.7" fill="#a8d0dc" opacity="0.59"/>
<circle cx="530.5" cy="869.7" r="0.7" fill="#a8d0dc" opacity="0.40"/>
<circle cx="488.7" cy="856.4" r="0.7" fill="#a8d0dc" opacity="0.33"/>
<circle cx="584.8" cy="869.5" r="0.7" fill="#a8d0dc" opacity="0.57"/>
<circle cx="524.4" cy="857.5" r="0.7" fill="#a8d0dc" opacity="0.42"/>
<circle cx="492.1" cy="876.9" r="0.7" fill="#a8d0dc" opacity="0.69"/>
<circle cx="599.0" cy="877.1" r="0.7" fill="#a8d0dc" opacity="0.48"/>
<circle cx="449.6" cy="876.4" r="0.7" fill="#a8d0dc" opacity="0.33"/>
<circle cx="563.7" cy="859.4" r="0.7" fill="#a8d0dc" opacity="0.56"/>
<circle cx="549.7" cy="873.7" r="0.7" fill="#a8d0dc" opacity="0.36"/>
<circle cx="539.9" cy="874.1" r="0.7" fill="#a8d0dc" opacity="0.62"/>
<circle cx="494.4" cy="877.9" r="0.7" fill="#a8d0dc" opacity="0.60"/>
<circle cx="536.9" cy="872.9" r="0.7" fill="#a8d0dc" opacity="0.49"/>
<circle cx="561.0" cy="860.3" r="0.7" fill="#a8d0dc" opacity="0.58"/>
<circle cx="543.7" cy="877.6" r="0.7" fill="#a8d0dc" opacity="0.57"/>
<circle cx="506.7" cy="873.5" r="0.7" fill="#a8d0dc" opacity="0.62"/>
<circle cx="484.4" cy="870.1" r="0.7" fill="#a8d0dc" opacity="0.43"/>
<circle cx="507.3" cy="869.3" r="0.7" fill="#a8d0dc" opacity="0.33"/>
<circle cx="581.5" cy="858.5" r="0.7" fill="#a8d0dc" opacity="0.42"/>
<circle cx="489.3" cy="857.0" r="0.7" fill="#a8d0dc" opacity="0.53"/>
<circle cx="478.4" cy="876.7" r="0.7" fill="#a8d0dc" opacity="0.51"/>
<circle cx="482.1" cy="868.4" r="0.7" fill="#a8d0dc" opacity="0.56"/>
<circle cx="457.8" cy="856.7" r="0.7" fill="#a8d0dc" opacity="0.42"/>
<circle cx="529.5" cy="868.3" r="0.7" fill="#a8d0dc" opacity="0.64"/>

<g stroke="#9a9a90" stroke-width="1.4" fill="none" opacity="0.85">
 <path d="M441 760 L442 812 M449 760 L453 812 M517 760 L516 812"/>
</g>
<g stroke="#d06c52" stroke-width="3" fill="none" stroke-linecap="round">
 <path d="M424 744 C418 732 419 720 423 713 C425 708 421 705 417 708"/>
 <path d="M552 724 C549 712 548 697 550 685 C551 676 555 672 561 674"/>
</g>
<path d="M415 708 L409 713 L418 711 Z M562 673 L569 680 L560 677 Z" fill="#e8e0d0"/>
<g filter="url(#t1b1)">
 <ellipse cx="444" cy="751" rx="27" ry="15" fill="url(#t1cl)"/>
 <circle cx="435" cy="743" r="10" fill="#eeb49a"/>
 <circle cx="452" cy="740" r="11" fill="#f2c2aa"/>
 <circle cx="464" cy="750" r="8" fill="#e28a70"/>
 <circle cx="424" cy="752" r="7" fill="#e4927a"/>
 <ellipse cx="521" cy="738" rx="38" ry="20" fill="url(#t1cl)"/>
 <circle cx="506" cy="727" r="13" fill="#f2c2aa"/>
 <circle cx="526" cy="720" r="12" fill="#ecb092"/>
 <circle cx="546" cy="735" r="10" fill="#e28e70"/>
 <circle cx="490" cy="740" r="9" fill="#e8a084"/>
 <ellipse cx="523" cy="754" rx="28" ry="7" fill="#bc5444" opacity="0.75"/>
 <ellipse cx="445" cy="762" rx="20" ry="5" fill="#bc5444" opacity="0.65"/>
</g>
</svg>
<svg class="a" style="left:676px;top:649px" width="258" height="257" viewBox="676 649 258 257">
<defs>
 <linearGradient id="t2cl" x1="0" y1="0" x2="1" y2="1"><stop offset="0" stop-color="#e0b4f2"/><stop offset="1" stop-color="#a47ad8"/></linearGradient>
 <linearGradient id="t2rc" x1="0" y1="0" x2="1" y2="1"><stop offset="0" stop-color="#3526a8"/><stop offset="1" stop-color="#7a3cc8"/></linearGradient>
 <pattern id="t2str" width="6" height="6" patternUnits="userSpaceOnUse" patternTransform="rotate(35)"><rect width="6" height="6" fill="#3d3fb0"/><rect width="2" height="6" fill="#8b8ee8"/></pattern>
 <pattern id="t2str2" width="6" height="6" patternUnits="userSpaceOnUse" patternTransform="rotate(-30)"><rect width="6" height="6" fill="#6aa0ec"/><rect width="2.5" height="6" fill="#b8e0fa"/></pattern>
 <pattern id="t2str3" width="8" height="8" patternUnits="userSpaceOnUse" patternTransform="rotate(62)"><rect width="8" height="8" fill="#2f2a9c"/><rect width="2.5" height="8" fill="#7a46c8"/></pattern>
 <clipPath id="t2cc"><circle cx="810" cy="778" r="66"/></clipPath>
</defs>
<rect x="676" y="649" width="258" height="257" fill="#f2e5fa"/>
<circle cx="810" cy="778" r="66" fill="#25196e"/>
<g clip-path="url(#t2cc)">
<circle cx="768.5" cy="771.7" r="0.6" fill="#7a6cd0" opacity="0.50"/>
<circle cx="797.1" cy="782.6" r="0.5" fill="#7a6cd0" opacity="0.73"/>
<circle cx="862.0" cy="816.0" r="0.8" fill="#7a6cd0" opacity="0.50"/>
<circle cx="835.4" cy="782.1" r="1.0" fill="#7a6cd0" opacity="0.74"/>
<circle cx="759.4" cy="727.6" r="1.0" fill="#7a6cd0" opacity="0.52"/>
<circle cx="762.4" cy="777.1" r="0.5" fill="#7a6cd0" opacity="0.64"/>
<circle cx="863.5" cy="804.5" r="0.6" fill="#7a6cd0" opacity="0.65"/>
<circle cx="815.2" cy="825.9" r="0.5" fill="#7a6cd0" opacity="0.48"/>
<circle cx="786.3" cy="803.9" r="1.0" fill="#7a6cd0" opacity="0.73"/>
<circle cx="855.0" cy="761.5" r="1.0" fill="#7a6cd0" opacity="0.90"/>
<circle cx="833.2" cy="735.8" r="0.8" fill="#7a6cd0" opacity="0.72"/>
<circle cx="747.8" cy="792.5" r="0.8" fill="#7a6cd0" opacity="0.80"/>
<circle cx="756.4" cy="775.9" r="0.6" fill="#7a6cd0" opacity="0.42"/>
<circle cx="838.8" cy="794.5" r="0.8" fill="#7a6cd0" opacity="0.45"/>
<circle cx="831.0" cy="757.1" r="0.6" fill="#7a6cd0" opacity="0.54"/>
<circle cx="789.1" cy="745.2" r="0.5" fill="#7a6cd0" opacity="0.81"/>
<circle cx="782.7" cy="821.3" r="1.0" fill="#7a6cd0" opacity="0.57"/>
<circle cx="873.9" cy="827.2" r="0.8" fill="#7a6cd0" opacity="0.89"/>
<circle cx="830.4" cy="816.5" r="0.8" fill="#7a6cd0" opacity="0.50"/>
<circle cx="838.1" cy="728.8" r="0.5" fill="#7a6cd0" opacity="0.79"/>
<circle cx="749.3" cy="807.4" r="1.0" fill="#7a6cd0" opacity="0.67"/>
<circle cx="750.6" cy="751.7" r="0.5" fill="#7a6cd0" opacity="0.42"/>
<circle cx="852.5" cy="774.7" r="0.5" fill="#7a6cd0" opacity="0.79"/>
<circle cx="864.1" cy="792.7" r="0.6" fill="#7a6cd0" opacity="0.71"/>
<circle cx="835.9" cy="790.7" r="0.5" fill="#7a6cd0" opacity="0.51"/>
<circle cx="832.0" cy="772.4" r="0.6" fill="#7a6cd0" opacity="0.45"/>
<circle cx="767.9" cy="716.9" r="0.5" fill="#7a6cd0" opacity="0.86"/>
<circle cx="830.6" cy="760.7" r="0.6" fill="#7a6cd0" opacity="0.79"/>
<circle cx="818.2" cy="746.1" r="0.8" fill="#7a6cd0" opacity="0.49"/>
<circle cx="748.5" cy="714.7" r="0.5" fill="#7a6cd0" opacity="0.65"/>
<circle cx="812.9" cy="820.9" r="1.0" fill="#7a6cd0" opacity="0.69"/>
<circle cx="865.3" cy="770.9" r="0.5" fill="#7a6cd0" opacity="0.74"/>
<circle cx="822.4" cy="843.1" r="0.6" fill="#7a6cd0" opacity="0.64"/>
<circle cx="798.4" cy="725.5" r="1.0" fill="#7a6cd0" opacity="0.51"/>
<circle cx="764.0" cy="714.0" r="0.5" fill="#7a6cd0" opacity="0.40"/>
<circle cx="832.4" cy="842.2" r="0.5" fill="#7a6cd0" opacity="0.51"/>
<circle cx="760.0" cy="774.3" r="0.8" fill="#7a6cd0" opacity="0.76"/>
<circle cx="776.0" cy="808.8" r="0.6" fill="#7a6cd0" opacity="0.86"/>
<circle cx="792.3" cy="810.6" r="0.6" fill="#7a6cd0" opacity="0.76"/>
<circle cx="755.1" cy="795.0" r="1.0" fill="#7a6cd0" opacity="0.63"/>
<circle cx="867.1" cy="745.5" r="0.5" fill="#7a6cd0" opacity="0.76"/>
<circle cx="745.5" cy="713.9" r="0.5" fill="#7a6cd0" opacity="0.59"/>
<circle cx="785.2" cy="791.2" r="1.0" fill="#7a6cd0" opacity="0.70"/>
<circle cx="785.7" cy="837.2" r="1.0" fill="#7a6cd0" opacity="0.63"/>
<circle cx="766.0" cy="839.6" r="0.5" fill="#7a6cd0" opacity="0.58"/>
<circle cx="829.1" cy="795.1" r="1.0" fill="#7a6cd0" opacity="0.64"/>
<circle cx="846.7" cy="771.8" r="0.8" fill="#7a6cd0" opacity="0.79"/>
<circle cx="818.8" cy="750.6" r="0.5" fill="#7a6cd0" opacity="0.71"/>
<circle cx="829.9" cy="817.9" r="0.8" fill="#7a6cd0" opacity="0.83"/>
<circle cx="839.8" cy="714.0" r="0.6" fill="#7a6cd0" opacity="0.70"/>
<circle cx="784.7" cy="768.6" r="0.6" fill="#7a6cd0" opacity="0.59"/>
<circle cx="834.4" cy="791.4" r="0.6" fill="#7a6cd0" opacity="0.80"/>
<circle cx="781.4" cy="712.2" r="0.8" fill="#7a6cd0" opacity="0.53"/>
<circle cx="764.8" cy="833.5" r="0.5" fill="#7a6cd0" opacity="0.54"/>
<circle cx="762.6" cy="829.6" r="0.6" fill="#7a6cd0" opacity="0.54"/>
<circle cx="856.4" cy="818.5" r="1.0" fill="#7a6cd0" opacity="0.57"/>
<circle cx="755.2" cy="785.1" r="1.0" fill="#7a6cd0" opacity="0.50"/>
<circle cx="843.0" cy="835.0" r="0.6" fill="#7a6cd0" opacity="0.55"/>
<circle cx="751.6" cy="764.2" r="0.6" fill="#7a6cd0" opacity="0.86"/>
<circle cx="821.4" cy="713.2" r="1.0" fill="#7a6cd0" opacity="0.63"/>
<circle cx="755.6" cy="818.5" r="0.5" fill="#7a6cd0" opacity="0.52"/>
<circle cx="820.5" cy="830.4" r="0.8" fill="#7a6cd0" opacity="0.64"/>
<circle cx="821.8" cy="737.0" r="0.6" fill="#7a6cd0" opacity="0.45"/>
<circle cx="850.4" cy="750.3" r="0.8" fill="#7a6cd0" opacity="0.60"/>
<circle cx="812.3" cy="731.7" r="0.5" fill="#7a6cd0" opacity="0.86"/>
<circle cx="809.1" cy="826.4" r="0.8" fill="#7a6cd0" opacity="0.72"/>
<circle cx="847.9" cy="732.6" r="0.5" fill="#7a6cd0" opacity="0.57"/>
<circle cx="812.6" cy="714.7" r="0.5" fill="#7a6cd0" opacity="0.50"/>
<circle cx="858.9" cy="786.6" r="0.6" fill="#7a6cd0" opacity="0.53"/>
<circle cx="846.9" cy="768.2" r="1.0" fill="#7a6cd0" opacity="0.78"/>
<circle cx="852.1" cy="839.2" r="0.8" fill="#7a6cd0" opacity="0.82"/>
<circle cx="788.7" cy="843.3" r="1.0" fill="#7a6cd0" opacity="0.44"/>
<circle cx="750.7" cy="785.6" r="1.0" fill="#7a6cd0" opacity="0.64"/>
<circle cx="855.6" cy="830.1" r="1.0" fill="#7a6cd0" opacity="0.86"/>
<circle cx="837.2" cy="723.9" r="0.8" fill="#7a6cd0" opacity="0.68"/>
<circle cx="828.6" cy="838.2" r="1.0" fill="#7a6cd0" opacity="0.49"/>
<circle cx="856.2" cy="761.0" r="0.6" fill="#7a6cd0" opacity="0.90"/>
<circle cx="773.3" cy="717.1" r="0.8" fill="#7a6cd0" opacity="0.87"/>
<circle cx="751.8" cy="785.0" r="0.5" fill="#7a6cd0" opacity="0.82"/>
<circle cx="750.2" cy="815.8" r="1.0" fill="#7a6cd0" opacity="0.43"/>
<circle cx="763.1" cy="811.7" r="0.6" fill="#7a6cd0" opacity="0.74"/>
<circle cx="783.4" cy="790.1" r="0.5" fill="#7a6cd0" opacity="0.64"/>
<circle cx="793.1" cy="763.5" r="0.8" fill="#7a6cd0" opacity="0.64"/>
<circle cx="766.3" cy="743.5" r="0.6" fill="#7a6cd0" opacity="0.86"/>
<circle cx="861.8" cy="773.8" r="0.6" fill="#7a6cd0" opacity="0.80"/>
<circle cx="764.7" cy="821.9" r="0.5" fill="#7a6cd0" opacity="0.87"/>
<circle cx="858.4" cy="829.3" r="0.6" fill="#7a6cd0" opacity="0.79"/>
<circle cx="870.4" cy="834.2" r="1.0" fill="#7a6cd0" opacity="0.82"/>
<circle cx="826.9" cy="771.7" r="0.8" fill="#7a6cd0" opacity="0.56"/>
<circle cx="774.9" cy="727.3" r="0.8" fill="#7a6cd0" opacity="0.47"/>
<circle cx="773.3" cy="719.5" r="1.0" fill="#7a6cd0" opacity="0.68"/>
<circle cx="763.1" cy="826.9" r="0.8" fill="#7a6cd0" opacity="0.61"/>
<circle cx="776.6" cy="715.4" r="0.8" fill="#7a6cd0" opacity="0.57"/>
<circle cx="766.1" cy="776.8" r="0.8" fill="#7a6cd0" opacity="0.63"/>
<circle cx="807.7" cy="732.2" r="0.5" fill="#7a6cd0" opacity="0.72"/>
<circle cx="848.0" cy="834.1" r="1.0" fill="#7a6cd0" opacity="0.82"/>
<circle cx="759.7" cy="811.6" r="0.8" fill="#7a6cd0" opacity="0.62"/>
<circle cx="778.5" cy="743.5" r="0.6" fill="#7a6cd0" opacity="0.45"/>
<circle cx="782.2" cy="830.3" r="0.5" fill="#7a6cd0" opacity="0.82"/>
<circle cx="873.2" cy="731.1" r="0.5" fill="#7a6cd0" opacity="0.62"/>
<circle cx="811.0" cy="779.4" r="1.0" fill="#7a6cd0" opacity="0.40"/>
<circle cx="853.9" cy="781.5" r="0.6" fill="#7a6cd0" opacity="0.58"/>
<circle cx="749.4" cy="766.0" r="0.8" fill="#7a6cd0" opacity="0.69"/>
<circle cx="762.2" cy="735.8" r="0.6" fill="#7a6cd0" opacity="0.76"/>
<circle cx="770.0" cy="722.5" r="0.5" fill="#7a6cd0" opacity="0.84"/>
<circle cx="840.5" cy="812.5" r="0.6" fill="#7a6cd0" opacity="0.50"/>
<circle cx="824.8" cy="805.4" r="0.6" fill="#7a6cd0" opacity="0.69"/>
<circle cx="770.7" cy="720.7" r="1.0" fill="#7a6cd0" opacity="0.82"/>
<circle cx="864.9" cy="780.4" r="0.8" fill="#7a6cd0" opacity="0.57"/>
<circle cx="855.1" cy="826.1" r="1.0" fill="#7a6cd0" opacity="0.45"/>
<circle cx="798.1" cy="812.7" r="0.6" fill="#7a6cd0" opacity="0.84"/>
<circle cx="779.1" cy="736.6" r="0.8" fill="#7a6cd0" opacity="0.42"/>
<circle cx="836.7" cy="787.9" r="0.5" fill="#7a6cd0" opacity="0.58"/>
<circle cx="867.0" cy="839.9" r="0.5" fill="#7a6cd0" opacity="0.46"/>
<circle cx="838.3" cy="819.8" r="0.8" fill="#7a6cd0" opacity="0.79"/>
<circle cx="858.6" cy="788.1" r="0.5" fill="#7a6cd0" opacity="0.55"/>
<circle cx="758.2" cy="808.5" r="1.0" fill="#7a6cd0" opacity="0.66"/>
<circle cx="814.0" cy="782.9" r="0.5" fill="#7a6cd0" opacity="0.52"/>
<circle cx="755.7" cy="793.7" r="0.6" fill="#7a6cd0" opacity="0.45"/>
<circle cx="777.1" cy="819.9" r="0.5" fill="#7a6cd0" opacity="0.41"/>
<circle cx="866.3" cy="809.5" r="0.8" fill="#7a6cd0" opacity="0.41"/>
<circle cx="823.1" cy="788.1" r="0.6" fill="#7a6cd0" opacity="0.75"/>
<circle cx="757.6" cy="826.8" r="0.6" fill="#7a6cd0" opacity="0.42"/>
<circle cx="760.2" cy="777.2" r="0.8" fill="#7a6cd0" opacity="0.46"/>
<circle cx="760.0" cy="828.7" r="0.6" fill="#7a6cd0" opacity="0.83"/>
<circle cx="763.4" cy="787.6" r="1.0" fill="#7a6cd0" opacity="0.48"/>
<circle cx="853.0" cy="835.8" r="1.0" fill="#7a6cd0" opacity="0.75"/>
<circle cx="822.8" cy="791.6" r="0.5" fill="#7a6cd0" opacity="0.60"/>
<circle cx="868.3" cy="814.6" r="0.8" fill="#7a6cd0" opacity="0.60"/>
<circle cx="854.7" cy="806.4" r="0.8" fill="#7a6cd0" opacity="0.81"/>
<circle cx="855.9" cy="719.1" r="0.6" fill="#7a6cd0" opacity="0.88"/>
<circle cx="867.3" cy="744.9" r="1.0" fill="#7a6cd0" opacity="0.73"/>
<circle cx="745.5" cy="726.4" r="0.6" fill="#7a6cd0" opacity="0.43"/>
<circle cx="801.2" cy="778.6" r="0.5" fill="#7a6cd0" opacity="0.51"/>
<circle cx="799.5" cy="764.4" r="1.0" fill="#7a6cd0" opacity="0.72"/>
<circle cx="850.8" cy="828.7" r="0.5" fill="#7a6cd0" opacity="0.42"/>
<circle cx="828.7" cy="747.1" r="0.8" fill="#7a6cd0" opacity="0.71"/>
<circle cx="850.4" cy="716.7" r="0.5" fill="#7a6cd0" opacity="0.53"/>
<circle cx="812.7" cy="769.2" r="0.5" fill="#7a6cd0" opacity="0.54"/>
<circle cx="784.3" cy="797.5" r="0.5" fill="#7a6cd0" opacity="0.43"/>
<circle cx="870.6" cy="833.6" r="0.8" fill="#7a6cd0" opacity="0.44"/>
<circle cx="821.9" cy="835.0" r="1.0" fill="#7a6cd0" opacity="0.46"/>
<circle cx="761.3" cy="750.8" r="1.0" fill="#7a6cd0" opacity="0.69"/>
<circle cx="780.2" cy="809.1" r="0.8" fill="#7a6cd0" opacity="0.82"/>
<circle cx="824.5" cy="787.3" r="1.0" fill="#7a6cd0" opacity="0.50"/>
<circle cx="837.8" cy="772.8" r="0.8" fill="#7a6cd0" opacity="0.71"/>
<circle cx="805.9" cy="753.0" r="0.6" fill="#7a6cd0" opacity="0.57"/>
<circle cx="768.9" cy="784.1" r="1.0" fill="#7a6cd0" opacity="0.41"/>
<circle cx="790.6" cy="825.8" r="0.6" fill="#7a6cd0" opacity="0.56"/>
<circle cx="787.0" cy="747.6" r="0.6" fill="#7a6cd0" opacity="0.55"/>
<circle cx="845.9" cy="732.9" r="0.5" fill="#7a6cd0" opacity="0.70"/>
<circle cx="789.9" cy="798.8" r="1.0" fill="#7a6cd0" opacity="0.82"/>
<circle cx="790.7" cy="812.7" r="0.6" fill="#7a6cd0" opacity="0.89"/>
<circle cx="833.5" cy="835.3" r="1.0" fill="#7a6cd0" opacity="0.57"/>
<circle cx="790.5" cy="801.1" r="0.8" fill="#7a6cd0" opacity="0.81"/>
<circle cx="812.3" cy="809.5" r="1.0" fill="#7a6cd0" opacity="0.53"/>
<circle cx="827.2" cy="795.4" r="0.6" fill="#7a6cd0" opacity="0.61"/>
<circle cx="757.6" cy="766.2" r="0.5" fill="#7a6cd0" opacity="0.65"/>
<circle cx="871.1" cy="787.5" r="1.0" fill="#7a6cd0" opacity="0.82"/>
<circle cx="780.9" cy="794.0" r="0.5" fill="#7a6cd0" opacity="0.59"/>
<circle cx="803.7" cy="772.4" r="0.8" fill="#7a6cd0" opacity="0.55"/>
<circle cx="795.6" cy="785.3" r="1.0" fill="#7a6cd0" opacity="0.72"/>
<circle cx="744.9" cy="810.4" r="1.0" fill="#7a6cd0" opacity="0.59"/>
<circle cx="783.6" cy="782.9" r="0.6" fill="#7a6cd0" opacity="0.62"/>
<circle cx="793.8" cy="742.6" r="0.8" fill="#7a6cd0" opacity="0.56"/>
<circle cx="855.3" cy="822.6" r="0.8" fill="#7a6cd0" opacity="0.50"/>
<circle cx="800.3" cy="832.2" r="0.5" fill="#7a6cd0" opacity="0.41"/>
<circle cx="777.9" cy="830.3" r="0.8" fill="#7a6cd0" opacity="0.86"/>
<circle cx="846.1" cy="783.1" r="1.0" fill="#7a6cd0" opacity="0.66"/>
<circle cx="812.3" cy="802.5" r="1.0" fill="#7a6cd0" opacity="0.63"/>
<circle cx="749.4" cy="801.3" r="1.0" fill="#7a6cd0" opacity="0.87"/>
<circle cx="833.3" cy="781.3" r="0.5" fill="#7a6cd0" opacity="0.60"/>
<circle cx="810.1" cy="797.6" r="0.6" fill="#7a6cd0" opacity="0.84"/>
<circle cx="871.3" cy="776.2" r="1.0" fill="#7a6cd0" opacity="0.78"/>
<circle cx="862.7" cy="789.5" r="0.5" fill="#7a6cd0" opacity="0.49"/>
<circle cx="786.0" cy="841.2" r="0.8" fill="#7a6cd0" opacity="0.66"/>
<circle cx="758.6" cy="830.1" r="0.8" fill="#7a6cd0" opacity="0.81"/>
<circle cx="874.7" cy="829.2" r="1.0" fill="#7a6cd0" opacity="0.72"/>
<circle cx="813.2" cy="819.7" r="0.6" fill="#7a6cd0" opacity="0.65"/>
<circle cx="768.8" cy="736.1" r="0.5" fill="#7a6cd0" opacity="0.58"/>
<circle cx="875.2" cy="796.0" r="0.5" fill="#7a6cd0" opacity="0.75"/>
<circle cx="745.4" cy="712.4" r="0.5" fill="#7a6cd0" opacity="0.86"/>
<circle cx="796.5" cy="725.0" r="0.5" fill="#7a6cd0" opacity="0.73"/>
<circle cx="770.0" cy="777.7" r="0.8" fill="#7a6cd0" opacity="0.84"/>
<circle cx="862.2" cy="779.9" r="0.6" fill="#7a6cd0" opacity="0.69"/>
<circle cx="798.3" cy="728.0" r="0.6" fill="#7a6cd0" opacity="0.66"/>
<circle cx="811.3" cy="715.8" r="0.5" fill="#7a6cd0" opacity="0.49"/>
<circle cx="813.0" cy="820.7" r="1.0" fill="#7a6cd0" opacity="0.80"/>
<circle cx="752.2" cy="713.6" r="0.8" fill="#7a6cd0" opacity="0.47"/>
<circle cx="775.5" cy="748.4" r="0.5" fill="#7a6cd0" opacity="0.53"/>
<circle cx="757.1" cy="831.3" r="0.5" fill="#7a6cd0" opacity="0.57"/>
<circle cx="803.4" cy="762.9" r="0.5" fill="#7a6cd0" opacity="0.51"/>
<circle cx="796.3" cy="812.9" r="0.5" fill="#7a6cd0" opacity="0.62"/>
<circle cx="825.9" cy="744.9" r="0.5" fill="#7a6cd0" opacity="0.48"/>
<circle cx="821.5" cy="734.9" r="0.5" fill="#7a6cd0" opacity="0.85"/>
<circle cx="851.7" cy="752.1" r="0.8" fill="#7a6cd0" opacity="0.88"/>
<circle cx="809.4" cy="837.4" r="0.6" fill="#7a6cd0" opacity="0.74"/>
<circle cx="833.1" cy="789.2" r="1.0" fill="#7a6cd0" opacity="0.55"/>
<circle cx="859.5" cy="775.9" r="0.6" fill="#7a6cd0" opacity="0.44"/>
<circle cx="766.4" cy="762.0" r="0.5" fill="#7a6cd0" opacity="0.89"/>
<circle cx="782.4" cy="786.1" r="0.5" fill="#7a6cd0" opacity="0.57"/>
<circle cx="859.0" cy="756.3" r="0.5" fill="#7a6cd0" opacity="0.88"/>
<circle cx="799.7" cy="832.5" r="0.6" fill="#7a6cd0" opacity="0.59"/>
<circle cx="805.6" cy="757.5" r="1.0" fill="#7a6cd0" opacity="0.42"/>
<circle cx="831.7" cy="757.1" r="0.6" fill="#7a6cd0" opacity="0.52"/>
<circle cx="761.1" cy="737.9" r="0.6" fill="#7a6cd0" opacity="0.68"/>
<circle cx="805.7" cy="816.9" r="0.6" fill="#7a6cd0" opacity="0.48"/>
<circle cx="790.6" cy="807.4" r="1.0" fill="#7a6cd0" opacity="0.71"/>
<circle cx="820.7" cy="751.2" r="1.0" fill="#7a6cd0" opacity="0.65"/>
<circle cx="774.0" cy="771.8" r="0.6" fill="#7a6cd0" opacity="0.87"/>
<circle cx="875.7" cy="790.7" r="1.0" fill="#7a6cd0" opacity="0.69"/>
<circle cx="792.6" cy="744.5" r="0.6" fill="#7a6cd0" opacity="0.46"/>
<circle cx="843.1" cy="801.5" r="0.5" fill="#7a6cd0" opacity="0.67"/>
<circle cx="779.7" cy="813.9" r="1.0" fill="#7a6cd0" opacity="0.41"/>
<circle cx="838.8" cy="731.1" r="0.5" fill="#7a6cd0" opacity="0.59"/>
<circle cx="755.4" cy="735.4" r="0.6" fill="#7a6cd0" opacity="0.56"/>
<circle cx="831.5" cy="726.4" r="0.8" fill="#7a6cd0" opacity="0.80"/>
<circle cx="844.1" cy="737.5" r="0.8" fill="#7a6cd0" opacity="0.44"/>
<circle cx="782.1" cy="819.8" r="1.0" fill="#7a6cd0" opacity="0.54"/>
<circle cx="797.2" cy="832.0" r="0.6" fill="#7a6cd0" opacity="0.87"/>
<circle cx="767.3" cy="760.4" r="0.8" fill="#7a6cd0" opacity="0.85"/>
<circle cx="747.3" cy="804.9" r="1.0" fill="#7a6cd0" opacity="0.52"/>
<circle cx="855.8" cy="758.5" r="0.5" fill="#7a6cd0" opacity="0.49"/>
<circle cx="759.2" cy="832.5" r="0.6" fill="#7a6cd0" opacity="0.76"/>
<circle cx="749.3" cy="717.3" r="0.6" fill="#7a6cd0" opacity="0.62"/>
<circle cx="843.9" cy="732.6" r="0.5" fill="#7a6cd0" opacity="0.68"/>
<circle cx="827.1" cy="836.3" r="0.6" fill="#7a6cd0" opacity="0.69"/>
<circle cx="838.6" cy="745.6" r="1.0" fill="#7a6cd0" opacity="0.74"/>
<circle cx="819.9" cy="835.5" r="0.5" fill="#7a6cd0" opacity="0.82"/>
<circle cx="846.5" cy="749.8" r="0.5" fill="#7a6cd0" opacity="0.84"/>
<circle cx="821.2" cy="803.9" r="0.6" fill="#7a6cd0" opacity="0.74"/>
<circle cx="748.9" cy="754.0" r="0.8" fill="#7a6cd0" opacity="0.77"/>
<circle cx="755.4" cy="803.7" r="1.0" fill="#7a6cd0" opacity="0.90"/>
<circle cx="825.2" cy="741.1" r="0.5" fill="#7a6cd0" opacity="0.57"/>
<circle cx="869.3" cy="770.4" r="0.8" fill="#7a6cd0" opacity="0.75"/>
<circle cx="841.5" cy="821.6" r="1.0" fill="#7a6cd0" opacity="0.65"/>
<circle cx="833.3" cy="739.2" r="0.6" fill="#7a6cd0" opacity="0.64"/>
<circle cx="769.0" cy="837.7" r="0.8" fill="#7a6cd0" opacity="0.49"/>
<circle cx="765.6" cy="815.1" r="0.6" fill="#7a6cd0" opacity="0.67"/>
<circle cx="777.0" cy="719.8" r="0.8" fill="#7a6cd0" opacity="0.57"/>
<circle cx="756.2" cy="796.0" r="0.6" fill="#7a6cd0" opacity="0.47"/>
<circle cx="837.3" cy="800.5" r="0.6" fill="#7a6cd0" opacity="0.75"/>
<circle cx="744.8" cy="803.3" r="0.6" fill="#7a6cd0" opacity="0.87"/>
<circle cx="790.4" cy="751.5" r="0.6" fill="#7a6cd0" opacity="0.69"/>
<circle cx="775.8" cy="795.1" r="0.5" fill="#7a6cd0" opacity="0.67"/>
<circle cx="844.4" cy="734.3" r="0.6" fill="#7a6cd0" opacity="0.70"/>
<circle cx="804.9" cy="813.1" r="0.6" fill="#7a6cd0" opacity="0.46"/>
<circle cx="782.2" cy="759.6" r="0.6" fill="#7a6cd0" opacity="0.42"/>
<circle cx="862.2" cy="752.1" r="0.5" fill="#7a6cd0" opacity="0.75"/>
<circle cx="803.1" cy="726.9" r="0.8" fill="#7a6cd0" opacity="0.62"/>
<circle cx="819.1" cy="750.2" r="0.5" fill="#7a6cd0" opacity="0.42"/>
<circle cx="805.8" cy="841.3" r="1.0" fill="#7a6cd0" opacity="0.44"/>
<circle cx="838.7" cy="841.4" r="0.8" fill="#7a6cd0" opacity="0.45"/>
<circle cx="808.5" cy="769.3" r="0.6" fill="#7a6cd0" opacity="0.79"/>
<circle cx="786.5" cy="759.4" r="0.5" fill="#7a6cd0" opacity="0.72"/>
<circle cx="826.9" cy="835.5" r="0.8" fill="#7a6cd0" opacity="0.73"/>
<circle cx="754.3" cy="810.7" r="0.5" fill="#7a6cd0" opacity="0.79"/>
<circle cx="854.8" cy="751.1" r="0.6" fill="#7a6cd0" opacity="0.88"/>
<circle cx="813.4" cy="830.2" r="0.6" fill="#7a6cd0" opacity="0.45"/>
<circle cx="838.9" cy="753.0" r="0.8" fill="#7a6cd0" opacity="0.59"/>
<circle cx="829.4" cy="759.0" r="0.6" fill="#7a6cd0" opacity="0.58"/>
<circle cx="816.7" cy="760.7" r="0.8" fill="#7a6cd0" opacity="0.52"/>
<circle cx="749.4" cy="786.8" r="1.0" fill="#7a6cd0" opacity="0.85"/>
<circle cx="868.7" cy="777.3" r="1.0" fill="#7a6cd0" opacity="0.77"/>
<circle cx="875.4" cy="791.5" r="0.5" fill="#7a6cd0" opacity="0.47"/>
<circle cx="774.0" cy="730.3" r="1.0" fill="#7a6cd0" opacity="0.44"/>
<circle cx="749.3" cy="770.0" r="0.6" fill="#7a6cd0" opacity="0.51"/>
<circle cx="793.2" cy="716.2" r="1.0" fill="#7a6cd0" opacity="0.47"/>
<circle cx="753.5" cy="719.3" r="1.0" fill="#7a6cd0" opacity="0.85"/>
<circle cx="752.3" cy="713.2" r="0.6" fill="#7a6cd0" opacity="0.85"/>
<circle cx="765.7" cy="751.0" r="1.0" fill="#7a6cd0" opacity="0.80"/>
<circle cx="833.1" cy="786.9" r="1.0" fill="#7a6cd0" opacity="0.44"/>
<circle cx="786.7" cy="772.8" r="0.6" fill="#7a6cd0" opacity="0.89"/>
<circle cx="871.0" cy="793.8" r="0.5" fill="#7a6cd0" opacity="0.76"/>
<circle cx="787.8" cy="798.9" r="1.0" fill="#7a6cd0" opacity="0.88"/>
<circle cx="807.5" cy="797.5" r="0.8" fill="#7a6cd0" opacity="0.83"/>
<circle cx="814.0" cy="795.7" r="0.6" fill="#7a6cd0" opacity="0.51"/>
<circle cx="841.6" cy="803.3" r="0.6" fill="#7a6cd0" opacity="0.73"/>
<circle cx="793.1" cy="788.7" r="1.0" fill="#7a6cd0" opacity="0.58"/>
<circle cx="775.7" cy="770.3" r="0.8" fill="#7a6cd0" opacity="0.46"/>
<circle cx="767.8" cy="829.5" r="0.5" fill="#7a6cd0" opacity="0.51"/>
<circle cx="854.5" cy="797.8" r="0.6" fill="#7a6cd0" opacity="0.67"/>
<circle cx="777.2" cy="776.6" r="1.0" fill="#7a6cd0" opacity="0.51"/>
<circle cx="819.6" cy="726.9" r="0.5" fill="#7a6cd0" opacity="0.83"/>
<circle cx="833.7" cy="817.6" r="0.6" fill="#7a6cd0" opacity="0.83"/>
<circle cx="816.7" cy="806.3" r="0.5" fill="#7a6cd0" opacity="0.71"/>
<circle cx="870.8" cy="780.0" r="1.0" fill="#7a6cd0" opacity="0.82"/>
<circle cx="795.7" cy="734.6" r="0.6" fill="#7a6cd0" opacity="0.68"/>
<circle cx="846.3" cy="730.1" r="0.5" fill="#7a6cd0" opacity="0.60"/>
<circle cx="750.2" cy="717.5" r="0.6" fill="#7a6cd0" opacity="0.63"/>
<circle cx="759.9" cy="729.9" r="0.5" fill="#7a6cd0" opacity="0.71"/>
<circle cx="859.1" cy="786.3" r="0.8" fill="#7a6cd0" opacity="0.48"/>
<circle cx="842.4" cy="757.1" r="0.5" fill="#7a6cd0" opacity="0.81"/>
<circle cx="760.2" cy="761.2" r="0.8" fill="#7a6cd0" opacity="0.76"/>
<circle cx="749.7" cy="791.7" r="0.5" fill="#7a6cd0" opacity="0.58"/>
<circle cx="787.2" cy="791.6" r="0.5" fill="#7a6cd0" opacity="0.86"/>
<circle cx="833.1" cy="745.6" r="0.6" fill="#7a6cd0" opacity="0.75"/>
<circle cx="746.8" cy="842.5" r="1.0" fill="#7a6cd0" opacity="0.46"/>
<circle cx="746.8" cy="726.6" r="0.8" fill="#7a6cd0" opacity="0.49"/>
<circle cx="817.2" cy="750.3" r="1.0" fill="#7a6cd0" opacity="0.82"/>
<circle cx="821.7" cy="745.0" r="0.8" fill="#7a6cd0" opacity="0.87"/>
<circle cx="745.8" cy="757.2" r="0.6" fill="#7a6cd0" opacity="0.64"/>
<circle cx="807.9" cy="716.2" r="0.5" fill="#7a6cd0" opacity="0.44"/>
<circle cx="825.9" cy="797.1" r="1.0" fill="#7a6cd0" opacity="0.82"/>
<circle cx="871.7" cy="803.5" r="1.0" fill="#7a6cd0" opacity="0.60"/>
<circle cx="859.2" cy="792.6" r="0.5" fill="#7a6cd0" opacity="0.58"/>
<circle cx="813.7" cy="753.1" r="0.6" fill="#7a6cd0" opacity="0.69"/>
<circle cx="749.8" cy="734.4" r="0.8" fill="#7a6cd0" opacity="0.76"/>
<circle cx="787.7" cy="773.8" r="0.8" fill="#7a6cd0" opacity="0.56"/>
<circle cx="788.3" cy="775.8" r="0.6" fill="#7a6cd0" opacity="0.41"/>
<circle cx="804.6" cy="842.2" r="0.5" fill="#7a6cd0" opacity="0.72"/>
<circle cx="840.0" cy="731.0" r="1.0" fill="#7a6cd0" opacity="0.54"/>
<circle cx="810.0" cy="746.6" r="0.6" fill="#7a6cd0" opacity="0.90"/>
<circle cx="748.5" cy="786.0" r="0.5" fill="#7a6cd0" opacity="0.84"/>
<circle cx="846.2" cy="795.6" r="0.5" fill="#7a6cd0" opacity="0.58"/>
<circle cx="781.2" cy="817.0" r="0.6" fill="#7a6cd0" opacity="0.74"/>
<circle cx="784.1" cy="812.8" r="0.8" fill="#7a6cd0" opacity="0.65"/>
<circle cx="827.8" cy="758.3" r="1.0" fill="#7a6cd0" opacity="0.57"/>
<circle cx="837.0" cy="800.7" r="1.0" fill="#7a6cd0" opacity="0.65"/>
<circle cx="862.0" cy="818.8" r="0.8" fill="#7a6cd0" opacity="0.48"/>
<circle cx="771.1" cy="829.3" r="1.0" fill="#7a6cd0" opacity="0.60"/>
<circle cx="796.3" cy="813.9" r="0.6" fill="#7a6cd0" opacity="0.69"/>
<circle cx="763.0" cy="807.0" r="0.8" fill="#7a6cd0" opacity="0.76"/>
<circle cx="816.8" cy="835.7" r="0.8" fill="#7a6cd0" opacity="0.44"/>
<circle cx="769.1" cy="834.1" r="0.6" fill="#7a6cd0" opacity="0.55"/>
<circle cx="790.7" cy="773.8" r="1.0" fill="#7a6cd0" opacity="0.76"/>
<circle cx="865.7" cy="822.7" r="0.8" fill="#7a6cd0" opacity="0.85"/>
<circle cx="780.4" cy="746.0" r="0.5" fill="#7a6cd0" opacity="0.78"/>
<circle cx="826.7" cy="743.3" r="0.5" fill="#7a6cd0" opacity="0.51"/>
<circle cx="796.7" cy="738.4" r="0.8" fill="#7a6cd0" opacity="0.83"/>
<circle cx="829.5" cy="738.0" r="0.5" fill="#7a6cd0" opacity="0.88"/>
<circle cx="823.3" cy="722.5" r="0.8" fill="#7a6cd0" opacity="0.76"/>
<circle cx="744.7" cy="747.7" r="0.5" fill="#7a6cd0" opacity="0.72"/>
<circle cx="865.8" cy="740.0" r="0.8" fill="#7a6cd0" opacity="0.83"/>
<circle cx="747.6" cy="776.2" r="0.8" fill="#7a6cd0" opacity="0.49"/>
<circle cx="858.0" cy="817.1" r="0.5" fill="#7a6cd0" opacity="0.71"/>
<circle cx="788.2" cy="777.3" r="1.0" fill="#7a6cd0" opacity="0.53"/>
<circle cx="805.2" cy="713.8" r="0.8" fill="#7a6cd0" opacity="0.68"/>
<circle cx="874.4" cy="719.4" r="0.8" fill="#7a6cd0" opacity="0.48"/>
<circle cx="746.5" cy="739.8" r="0.5" fill="#7a6cd0" opacity="0.58"/>
<circle cx="791.7" cy="757.4" r="0.6" fill="#7a6cd0" opacity="0.73"/>
<circle cx="823.4" cy="755.7" r="0.8" fill="#7a6cd0" opacity="0.81"/>
<circle cx="807.0" cy="716.2" r="0.8" fill="#7a6cd0" opacity="0.73"/>
<circle cx="816.5" cy="805.2" r="0.8" fill="#7a6cd0" opacity="0.58"/>
<circle cx="813.9" cy="748.2" r="0.8" fill="#7a6cd0" opacity="0.40"/>
<circle cx="806.8" cy="798.5" r="0.8" fill="#7a6cd0" opacity="0.48"/>
<circle cx="827.0" cy="764.9" r="0.5" fill="#7a6cd0" opacity="0.87"/>
<circle cx="826.5" cy="728.1" r="0.6" fill="#7a6cd0" opacity="0.68"/>
<circle cx="768.0" cy="836.0" r="0.8" fill="#7a6cd0" opacity="0.77"/>
<circle cx="863.2" cy="827.0" r="0.6" fill="#7a6cd0" opacity="0.66"/>
<circle cx="790.3" cy="805.7" r="1.0" fill="#7a6cd0" opacity="0.89"/>
<circle cx="809.9" cy="796.0" r="0.8" fill="#7a6cd0" opacity="0.85"/>
<circle cx="795.4" cy="740.0" r="0.5" fill="#7a6cd0" opacity="0.45"/>
<circle cx="840.8" cy="720.6" r="1.0" fill="#7a6cd0" opacity="0.74"/>
<circle cx="790.3" cy="742.1" r="1.0" fill="#7a6cd0" opacity="0.60"/>
<circle cx="865.3" cy="836.7" r="0.6" fill="#7a6cd0" opacity="0.42"/>
<circle cx="746.7" cy="805.6" r="0.6" fill="#7a6cd0" opacity="0.52"/>
<circle cx="770.8" cy="812.2" r="0.8" fill="#7a6cd0" opacity="0.55"/>
<circle cx="875.2" cy="740.6" r="0.6" fill="#7a6cd0" opacity="0.64"/>
<circle cx="867.3" cy="813.5" r="0.6" fill="#7a6cd0" opacity="0.81"/>
<circle cx="781.3" cy="755.8" r="1.0" fill="#7a6cd0" opacity="0.84"/>
<circle cx="777.0" cy="754.2" r="1.0" fill="#7a6cd0" opacity="0.51"/>
<circle cx="750.9" cy="815.2" r="0.8" fill="#7a6cd0" opacity="0.42"/>
<circle cx="846.2" cy="770.0" r="1.0" fill="#7a6cd0" opacity="0.83"/>
<circle cx="875.3" cy="751.3" r="0.5" fill="#7a6cd0" opacity="0.80"/>
<circle cx="764.1" cy="832.5" r="0.6" fill="#7a6cd0" opacity="0.86"/>
<circle cx="763.9" cy="809.2" r="0.5" fill="#7a6cd0" opacity="0.78"/>
<circle cx="805.3" cy="764.4" r="1.0" fill="#7a6cd0" opacity="0.57"/>
<circle cx="865.2" cy="806.6" r="0.8" fill="#7a6cd0" opacity="0.89"/>
<circle cx="748.3" cy="743.0" r="0.5" fill="#7a6cd0" opacity="0.42"/>
<circle cx="810.6" cy="742.6" r="1.0" fill="#7a6cd0" opacity="0.75"/>
<circle cx="840.2" cy="718.4" r="0.8" fill="#7a6cd0" opacity="0.43"/>
<circle cx="758.6" cy="838.3" r="0.6" fill="#7a6cd0" opacity="0.66"/>
<circle cx="744.3" cy="741.6" r="0.6" fill="#7a6cd0" opacity="0.72"/>
<circle cx="816.0" cy="843.1" r="0.8" fill="#7a6cd0" opacity="0.82"/>
<circle cx="870.4" cy="722.2" r="0.6" fill="#7a6cd0" opacity="0.83"/>
<circle cx="872.3" cy="741.6" r="0.5" fill="#7a6cd0" opacity="0.54"/>
<circle cx="767.4" cy="746.9" r="0.5" fill="#7a6cd0" opacity="0.88"/>
<circle cx="769.9" cy="718.3" r="0.8" fill="#7a6cd0" opacity="0.53"/>
<circle cx="787.0" cy="717.5" r="1.0" fill="#7a6cd0" opacity="0.67"/>
<circle cx="816.4" cy="803.1" r="0.8" fill="#7a6cd0" opacity="0.60"/>
<circle cx="786.0" cy="767.3" r="0.6" fill="#7a6cd0" opacity="0.59"/>
<circle cx="794.9" cy="766.1" r="0.6" fill="#7a6cd0" opacity="0.85"/>
<circle cx="827.8" cy="743.6" r="0.8" fill="#7a6cd0" opacity="0.75"/>
<circle cx="840.4" cy="842.8" r="0.6" fill="#7a6cd0" opacity="0.73"/>
<circle cx="755.5" cy="793.9" r="0.5" fill="#7a6cd0" opacity="0.85"/>
<circle cx="750.5" cy="803.6" r="0.8" fill="#7a6cd0" opacity="0.74"/>
<circle cx="802.4" cy="800.2" r="1.0" fill="#7a6cd0" opacity="0.89"/>
<circle cx="744.1" cy="810.5" r="1.0" fill="#7a6cd0" opacity="0.66"/>
<circle cx="822.2" cy="843.3" r="0.6" fill="#7a6cd0" opacity="0.81"/>
<circle cx="848.5" cy="826.8" r="0.8" fill="#7a6cd0" opacity="0.76"/>
<circle cx="795.9" cy="781.5" r="0.8" fill="#7a6cd0" opacity="0.44"/>
<circle cx="849.2" cy="799.7" r="0.8" fill="#7a6cd0" opacity="0.53"/>
<circle cx="855.0" cy="825.2" r="0.8" fill="#7a6cd0" opacity="0.66"/>
<circle cx="806.9" cy="741.2" r="0.6" fill="#7a6cd0" opacity="0.43"/>
<circle cx="844.0" cy="760.1" r="0.6" fill="#7a6cd0" opacity="0.66"/>
<circle cx="851.4" cy="743.5" r="0.6" fill="#7a6cd0" opacity="0.48"/>
<circle cx="831.4" cy="735.5" r="0.5" fill="#7a6cd0" opacity="0.56"/>
<circle cx="791.8" cy="826.0" r="1.0" fill="#7a6cd0" opacity="0.46"/>
<circle cx="764.3" cy="745.2" r="0.5" fill="#7a6cd0" opacity="0.58"/>
<circle cx="831.5" cy="781.0" r="0.8" fill="#7a6cd0" opacity="0.63"/>
<circle cx="755.6" cy="764.2" r="1.0" fill="#7a6cd0" opacity="0.75"/>
<circle cx="803.3" cy="775.1" r="0.6" fill="#7a6cd0" opacity="0.78"/>
<circle cx="763.8" cy="801.8" r="0.8" fill="#7a6cd0" opacity="0.64"/>
<circle cx="831.2" cy="794.2" r="0.8" fill="#7a6cd0" opacity="0.80"/>
<circle cx="777.4" cy="785.4" r="0.5" fill="#7a6cd0" opacity="0.69"/>
<circle cx="751.6" cy="735.6" r="0.8" fill="#7a6cd0" opacity="0.86"/>
<circle cx="777.7" cy="747.0" r="1.0" fill="#7a6cd0" opacity="0.45"/>
<circle cx="828.0" cy="825.4" r="0.6" fill="#7a6cd0" opacity="0.46"/>
<circle cx="870.5" cy="750.3" r="0.8" fill="#7a6cd0" opacity="0.86"/>
<circle cx="838.7" cy="761.6" r="0.5" fill="#7a6cd0" opacity="0.76"/>
<circle cx="783.0" cy="765.8" r="0.8" fill="#7a6cd0" opacity="0.58"/>
<circle cx="794.9" cy="788.4" r="0.6" fill="#7a6cd0" opacity="0.89"/>
<circle cx="856.4" cy="788.6" r="0.5" fill="#7a6cd0" opacity="0.73"/>
<circle cx="787.5" cy="721.3" r="1.0" fill="#7a6cd0" opacity="0.59"/>
<circle cx="813.4" cy="777.6" r="0.5" fill="#7a6cd0" opacity="0.45"/>
<circle cx="818.4" cy="835.4" r="1.0" fill="#7a6cd0" opacity="0.61"/>
<circle cx="806.5" cy="829.5" r="1.0" fill="#7a6cd0" opacity="0.60"/>
<circle cx="761.9" cy="811.4" r="0.5" fill="#7a6cd0" opacity="0.74"/>
<circle cx="841.7" cy="765.0" r="0.5" fill="#7a6cd0" opacity="0.86"/>
<circle cx="782.8" cy="755.6" r="1.0" fill="#7a6cd0" opacity="0.78"/>
<circle cx="759.6" cy="741.1" r="0.5" fill="#7a6cd0" opacity="0.69"/>
<circle cx="746.0" cy="777.6" r="0.6" fill="#7a6cd0" opacity="0.68"/>
<circle cx="751.3" cy="801.9" r="0.8" fill="#7a6cd0" opacity="0.64"/>
<circle cx="751.2" cy="803.2" r="1.0" fill="#7a6cd0" opacity="0.82"/>
<circle cx="762.5" cy="765.7" r="0.5" fill="#7a6cd0" opacity="0.84"/>
<circle cx="763.2" cy="756.1" r="0.5" fill="#7a6cd0" opacity="0.49"/>
<circle cx="815.1" cy="780.6" r="0.5" fill="#7a6cd0" opacity="0.56"/>
<circle cx="777.7" cy="825.4" r="1.0" fill="#7a6cd0" opacity="0.66"/>
<circle cx="799.5" cy="718.8" r="0.8" fill="#7a6cd0" opacity="0.52"/>
<circle cx="794.2" cy="769.6" r="0.8" fill="#7a6cd0" opacity="0.55"/>
<circle cx="761.4" cy="739.4" r="0.8" fill="#7a6cd0" opacity="0.87"/>
<circle cx="830.6" cy="805.7" r="0.6" fill="#7a6cd0" opacity="0.58"/>
<circle cx="849.8" cy="738.4" r="0.5" fill="#7a6cd0" opacity="0.76"/>
<circle cx="745.1" cy="720.9" r="0.8" fill="#7a6cd0" opacity="0.42"/>
<circle cx="773.0" cy="770.0" r="0.6" fill="#7a6cd0" opacity="0.76"/>
<circle cx="849.9" cy="790.2" r="1.0" fill="#7a6cd0" opacity="0.60"/>
<circle cx="840.1" cy="738.9" r="0.6" fill="#7a6cd0" opacity="0.43"/>
<circle cx="801.3" cy="796.4" r="0.5" fill="#7a6cd0" opacity="0.47"/>
<circle cx="860.2" cy="819.5" r="1.0" fill="#7a6cd0" opacity="0.49"/>
<circle cx="865.8" cy="786.1" r="0.6" fill="#7a6cd0" opacity="0.65"/>
<circle cx="832.9" cy="801.1" r="0.8" fill="#7a6cd0" opacity="0.80"/>
<circle cx="814.5" cy="733.0" r="0.6" fill="#7a6cd0" opacity="0.66"/>
<circle cx="805.5" cy="738.6" r="0.5" fill="#7a6cd0" opacity="0.88"/>
<circle cx="798.7" cy="799.0" r="0.8" fill="#7a6cd0" opacity="0.75"/>
<circle cx="802.4" cy="768.0" r="0.5" fill="#7a6cd0" opacity="0.86"/>
<circle cx="761.6" cy="733.1" r="1.0" fill="#7a6cd0" opacity="0.55"/>
<circle cx="774.7" cy="788.8" r="0.8" fill="#7a6cd0" opacity="0.75"/>
<circle cx="839.0" cy="752.9" r="0.8" fill="#7a6cd0" opacity="0.56"/>
<circle cx="855.1" cy="732.1" r="0.6" fill="#7a6cd0" opacity="0.60"/>
<circle cx="748.3" cy="762.2" r="0.8" fill="#7a6cd0" opacity="0.51"/>
<circle cx="816.0" cy="724.4" r="1.0" fill="#7a6cd0" opacity="0.47"/>
<circle cx="768.3" cy="756.0" r="1.0" fill="#7a6cd0" opacity="0.46"/>
<circle cx="853.4" cy="728.1" r="0.6" fill="#7a6cd0" opacity="0.90"/>
<circle cx="868.0" cy="781.5" r="0.8" fill="#7a6cd0" opacity="0.64"/>
<circle cx="746.3" cy="815.2" r="0.5" fill="#7a6cd0" opacity="0.50"/>
<circle cx="781.0" cy="752.0" r="0.5" fill="#7a6cd0" opacity="0.50"/>
<circle cx="806.1" cy="813.3" r="0.6" fill="#7a6cd0" opacity="0.69"/>
<circle cx="783.6" cy="788.6" r="0.5" fill="#7a6cd0" opacity="0.88"/>
<circle cx="789.4" cy="836.7" r="0.8" fill="#7a6cd0" opacity="0.43"/>
<circle cx="788.0" cy="771.4" r="0.6" fill="#7a6cd0" opacity="0.56"/>
<circle cx="792.1" cy="726.5" r="0.8" fill="#7a6cd0" opacity="0.80"/>
<circle cx="839.5" cy="772.1" r="0.5" fill="#7a6cd0" opacity="0.79"/>
<circle cx="822.6" cy="772.9" r="0.5" fill="#7a6cd0" opacity="0.42"/>
<circle cx="820.5" cy="766.5" r="0.6" fill="#7a6cd0" opacity="0.61"/>
<circle cx="854.5" cy="722.1" r="0.6" fill="#7a6cd0" opacity="0.58"/>
<circle cx="831.5" cy="723.9" r="0.5" fill="#7a6cd0" opacity="0.82"/>
<circle cx="859.3" cy="775.4" r="0.6" fill="#7a6cd0" opacity="0.53"/>
<circle cx="758.1" cy="743.5" r="0.6" fill="#7a6cd0" opacity="0.65"/>
<circle cx="814.8" cy="727.5" r="1.0" fill="#7a6cd0" opacity="0.52"/>
<circle cx="819.0" cy="717.6" r="0.8" fill="#7a6cd0" opacity="0.58"/>
<circle cx="770.1" cy="765.3" r="0.6" fill="#7a6cd0" opacity="0.89"/>
<circle cx="863.9" cy="807.9" r="0.6" fill="#7a6cd0" opacity="0.85"/>
<circle cx="746.0" cy="836.5" r="1.0" fill="#7a6cd0" opacity="0.80"/>
<circle cx="836.6" cy="739.8" r="0.6" fill="#7a6cd0" opacity="0.44"/>
<circle cx="766.6" cy="823.0" r="0.5" fill="#7a6cd0" opacity="0.61"/>
<circle cx="826.4" cy="726.5" r="0.5" fill="#7a6cd0" opacity="0.44"/>
<circle cx="820.4" cy="742.9" r="0.5" fill="#7a6cd0" opacity="0.81"/>
<circle cx="753.6" cy="756.5" r="0.5" fill="#7a6cd0" opacity="0.42"/>
<circle cx="825.6" cy="803.3" r="0.8" fill="#7a6cd0" opacity="0.57"/>
<circle cx="851.0" cy="773.0" r="0.6" fill="#7a6cd0" opacity="0.41"/>
<circle cx="868.1" cy="766.4" r="1.0" fill="#7a6cd0" opacity="0.42"/>
<circle cx="848.1" cy="731.5" r="0.6" fill="#7a6cd0" opacity="0.48"/>
<circle cx="789.5" cy="730.5" r="0.6" fill="#7a6cd0" opacity="0.86"/>
<circle cx="834.6" cy="805.5" r="0.5" fill="#7a6cd0" opacity="0.90"/>
<circle cx="848.5" cy="775.3" r="1.0" fill="#7a6cd0" opacity="0.66"/>
<circle cx="787.6" cy="721.1" r="0.5" fill="#7a6cd0" opacity="0.50"/>
<circle cx="826.5" cy="823.6" r="1.0" fill="#7a6cd0" opacity="0.45"/>
<circle cx="838.7" cy="758.1" r="0.6" fill="#7a6cd0" opacity="0.80"/>
<circle cx="809.0" cy="813.9" r="1.0" fill="#7a6cd0" opacity="0.47"/>
<circle cx="853.4" cy="835.7" r="0.5" fill="#7a6cd0" opacity="0.77"/>
<circle cx="853.9" cy="817.9" r="0.6" fill="#7a6cd0" opacity="0.62"/>
<circle cx="852.9" cy="815.5" r="0.8" fill="#7a6cd0" opacity="0.77"/>
<circle cx="822.4" cy="798.5" r="0.5" fill="#7a6cd0" opacity="0.43"/>
<circle cx="847.4" cy="817.9" r="0.6" fill="#7a6cd0" opacity="0.52"/>
<circle cx="821.6" cy="786.1" r="1.0" fill="#7a6cd0" opacity="0.69"/>
<circle cx="867.2" cy="829.4" r="0.5" fill="#7a6cd0" opacity="0.60"/>
<circle cx="847.5" cy="816.8" r="0.8" fill="#7a6cd0" opacity="0.81"/>
<circle cx="797.6" cy="723.5" r="0.8" fill="#7a6cd0" opacity="0.73"/>
<circle cx="863.3" cy="768.3" r="0.8" fill="#7a6cd0" opacity="0.40"/>
<circle cx="808.6" cy="714.2" r="0.5" fill="#7a6cd0" opacity="0.84"/>
<circle cx="806.8" cy="766.2" r="0.8" fill="#7a6cd0" opacity="0.63"/>
<circle cx="788.3" cy="740.2" r="0.8" fill="#7a6cd0" opacity="0.60"/>
<circle cx="805.5" cy="716.3" r="0.8" fill="#7a6cd0" opacity="0.44"/>
<circle cx="779.8" cy="804.6" r="1.0" fill="#7a6cd0" opacity="0.60"/>
<circle cx="815.0" cy="743.9" r="0.6" fill="#7a6cd0" opacity="0.74"/>
<circle cx="749.5" cy="820.6" r="0.6" fill="#7a6cd0" opacity="0.59"/>
<circle cx="787.9" cy="731.9" r="0.6" fill="#7a6cd0" opacity="0.51"/>
<circle cx="861.5" cy="792.6" r="1.0" fill="#7a6cd0" opacity="0.55"/>
<circle cx="786.0" cy="827.7" r="0.6" fill="#7a6cd0" opacity="0.83"/>
<circle cx="871.8" cy="763.6" r="0.5" fill="#7a6cd0" opacity="0.40"/>
<circle cx="767.1" cy="836.7" r="1.0" fill="#7a6cd0" opacity="0.68"/>
<circle cx="830.7" cy="809.2" r="0.5" fill="#7a6cd0" opacity="0.89"/>
<circle cx="841.0" cy="811.4" r="1.0" fill="#7a6cd0" opacity="0.47"/>
<circle cx="843.4" cy="745.4" r="1.0" fill="#7a6cd0" opacity="0.44"/>
<circle cx="826.4" cy="770.6" r="0.8" fill="#7a6cd0" opacity="0.58"/>
<circle cx="831.3" cy="795.4" r="1.0" fill="#7a6cd0" opacity="0.87"/>
<circle cx="850.7" cy="719.9" r="1.0" fill="#7a6cd0" opacity="0.65"/>
<circle cx="835.3" cy="714.4" r="0.5" fill="#7a6cd0" opacity="0.68"/>
<circle cx="803.1" cy="811.1" r="0.6" fill="#7a6cd0" opacity="0.76"/>
<circle cx="843.0" cy="716.6" r="0.8" fill="#7a6cd0" opacity="0.64"/>
<circle cx="744.9" cy="835.6" r="0.8" fill="#7a6cd0" opacity="0.47"/>
<circle cx="821.6" cy="788.1" r="0.5" fill="#7a6cd0" opacity="0.90"/>
<circle cx="766.9" cy="789.8" r="0.8" fill="#7a6cd0" opacity="0.71"/>
<circle cx="775.9" cy="814.0" r="0.5" fill="#7a6cd0" opacity="0.61"/>
<circle cx="873.1" cy="797.6" r="1.0" fill="#7a6cd0" opacity="0.65"/>
<circle cx="872.6" cy="759.6" r="0.8" fill="#7a6cd0" opacity="0.56"/>
<circle cx="854.0" cy="777.4" r="0.5" fill="#7a6cd0" opacity="0.80"/>
<circle cx="789.8" cy="730.5" r="0.5" fill="#7a6cd0" opacity="0.48"/>
<circle cx="841.5" cy="734.5" r="0.8" fill="#7a6cd0" opacity="0.85"/>
<circle cx="821.5" cy="840.2" r="0.8" fill="#7a6cd0" opacity="0.88"/>
<circle cx="768.7" cy="752.8" r="1.0" fill="#7a6cd0" opacity="0.50"/>
<circle cx="786.4" cy="769.9" r="0.5" fill="#7a6cd0" opacity="0.74"/>
<circle cx="791.8" cy="754.2" r="1.0" fill="#7a6cd0" opacity="0.53"/>
<circle cx="770.9" cy="832.0" r="1.0" fill="#7a6cd0" opacity="0.65"/>
<circle cx="797.9" cy="733.1" r="0.8" fill="#7a6cd0" opacity="0.42"/>
<circle cx="780.8" cy="782.7" r="1.0" fill="#7a6cd0" opacity="0.78"/>
<circle cx="780.4" cy="759.9" r="1.0" fill="#7a6cd0" opacity="0.66"/>
<circle cx="782.1" cy="795.2" r="0.8" fill="#7a6cd0" opacity="0.62"/>
<circle cx="745.6" cy="782.2" r="0.8" fill="#7a6cd0" opacity="0.58"/>
<circle cx="868.1" cy="747.0" r="0.6" fill="#7a6cd0" opacity="0.84"/>
<circle cx="859.6" cy="724.7" r="1.0" fill="#7a6cd0" opacity="0.82"/>
<circle cx="838.0" cy="834.8" r="0.6" fill="#7a6cd0" opacity="0.72"/>
<circle cx="871.7" cy="795.7" r="0.5" fill="#7a6cd0" opacity="0.79"/>
<circle cx="796.1" cy="836.1" r="0.8" fill="#7a6cd0" opacity="0.60"/>
<circle cx="810.0" cy="756.5" r="0.6" fill="#7a6cd0" opacity="0.76"/>
<circle cx="762.9" cy="809.1" r="1.0" fill="#7a6cd0" opacity="0.73"/>
<circle cx="863.0" cy="729.6" r="0.8" fill="#7a6cd0" opacity="0.74"/>
<circle cx="866.0" cy="720.8" r="0.5" fill="#7a6cd0" opacity="0.83"/>
<circle cx="832.2" cy="788.3" r="1.0" fill="#7a6cd0" opacity="0.51"/>
<circle cx="840.2" cy="815.6" r="0.6" fill="#7a6cd0" opacity="0.48"/>
<circle cx="832.6" cy="811.5" r="0.5" fill="#7a6cd0" opacity="0.85"/>
<circle cx="862.6" cy="810.1" r="1.0" fill="#7a6cd0" opacity="0.84"/>
<circle cx="761.3" cy="804.9" r="1.0" fill="#7a6cd0" opacity="0.71"/>
<circle cx="780.3" cy="720.9" r="0.8" fill="#7a6cd0" opacity="0.70"/>
<circle cx="863.3" cy="752.8" r="0.8" fill="#7a6cd0" opacity="0.74"/>
<circle cx="872.7" cy="817.9" r="0.8" fill="#7a6cd0" opacity="0.41"/>
<circle cx="812.3" cy="728.1" r="0.8" fill="#7a6cd0" opacity="0.51"/>
<circle cx="804.4" cy="812.8" r="1.0" fill="#7a6cd0" opacity="0.54"/>
<circle cx="751.8" cy="770.8" r="0.5" fill="#7a6cd0" opacity="0.42"/>
<circle cx="853.2" cy="726.6" r="0.6" fill="#7a6cd0" opacity="0.55"/>
<circle cx="867.6" cy="839.3" r="0.6" fill="#7a6cd0" opacity="0.51"/>
<circle cx="848.7" cy="739.6" r="0.5" fill="#7a6cd0" opacity="0.51"/>
<circle cx="766.8" cy="819.0" r="0.8" fill="#7a6cd0" opacity="0.61"/>
<circle cx="752.3" cy="795.2" r="0.5" fill="#7a6cd0" opacity="0.69"/>
<circle cx="796.8" cy="779.6" r="1.0" fill="#7a6cd0" opacity="0.51"/>
<circle cx="858.5" cy="843.4" r="0.8" fill="#7a6cd0" opacity="0.88"/>
<circle cx="787.5" cy="842.2" r="0.5" fill="#7a6cd0" opacity="0.72"/>
<circle cx="820.0" cy="768.9" r="1.0" fill="#7a6cd0" opacity="0.50"/>
<circle cx="825.3" cy="726.8" r="0.6" fill="#7a6cd0" opacity="0.54"/>
<circle cx="769.6" cy="809.2" r="0.5" fill="#7a6cd0" opacity="0.62"/>
<circle cx="770.1" cy="804.9" r="0.6" fill="#7a6cd0" opacity="0.79"/>
<circle cx="770.6" cy="811.7" r="0.8" fill="#7a6cd0" opacity="0.77"/>
<circle cx="869.2" cy="833.4" r="0.5" fill="#7a6cd0" opacity="0.43"/>
<circle cx="771.1" cy="713.7" r="0.8" fill="#7a6cd0" opacity="0.68"/>
<circle cx="826.8" cy="786.6" r="0.8" fill="#7a6cd0" opacity="0.90"/>
<circle cx="784.4" cy="717.8" r="0.6" fill="#7a6cd0" opacity="0.75"/>
<circle cx="799.6" cy="715.9" r="1.0" fill="#7a6cd0" opacity="0.79"/>
<circle cx="789.3" cy="825.3" r="0.8" fill="#7a6cd0" opacity="0.79"/>
<circle cx="806.2" cy="842.8" r="0.8" fill="#7a6cd0" opacity="0.80"/>
<circle cx="806.9" cy="820.5" r="0.6" fill="#7a6cd0" opacity="0.82"/>
<circle cx="813.7" cy="745.2" r="1.0" fill="#7a6cd0" opacity="0.50"/>
<circle cx="777.3" cy="714.8" r="0.6" fill="#7a6cd0" opacity="0.76"/>
<circle cx="868.8" cy="841.4" r="1.0" fill="#7a6cd0" opacity="0.79"/>
<circle cx="839.8" cy="733.2" r="1.0" fill="#7a6cd0" opacity="0.47"/>
<circle cx="745.7" cy="740.3" r="1.0" fill="#7a6cd0" opacity="0.41"/>
<circle cx="851.3" cy="840.5" r="0.5" fill="#7a6cd0" opacity="0.63"/>
<circle cx="749.7" cy="829.4" r="0.5" fill="#7a6cd0" opacity="0.83"/>
<circle cx="788.7" cy="785.9" r="1.0" fill="#7a6cd0" opacity="0.64"/>
<circle cx="828.4" cy="739.2" r="0.6" fill="#7a6cd0" opacity="0.50"/>
<circle cx="790.8" cy="828.2" r="0.5" fill="#7a6cd0" opacity="0.70"/>
<circle cx="760.7" cy="738.4" r="1.0" fill="#7a6cd0" opacity="0.69"/>
<circle cx="865.5" cy="802.5" r="1.0" fill="#7a6cd0" opacity="0.78"/>
<circle cx="819.3" cy="806.9" r="1.0" fill="#7a6cd0" opacity="0.48"/>
<circle cx="830.1" cy="825.8" r="0.6" fill="#7a6cd0" opacity="0.76"/>
<circle cx="806.0" cy="828.2" r="0.6" fill="#7a6cd0" opacity="0.46"/>
<circle cx="809.7" cy="762.4" r="0.6" fill="#7a6cd0" opacity="0.80"/>
<circle cx="861.4" cy="712.6" r="0.6" fill="#7a6cd0" opacity="0.72"/>
<circle cx="841.9" cy="717.1" r="0.5" fill="#7a6cd0" opacity="0.85"/>
<circle cx="770.4" cy="712.1" r="1.0" fill="#7a6cd0" opacity="0.42"/>
<circle cx="775.7" cy="834.9" r="0.6" fill="#7a6cd0" opacity="0.79"/>
<circle cx="749.8" cy="785.4" r="1.0" fill="#7a6cd0" opacity="0.53"/>
<circle cx="764.3" cy="714.4" r="0.5" fill="#7a6cd0" opacity="0.78"/>
<circle cx="860.5" cy="724.7" r="0.6" fill="#7a6cd0" opacity="0.80"/>
<circle cx="765.5" cy="779.6" r="0.5" fill="#7a6cd0" opacity="0.65"/>
<circle cx="870.3" cy="762.4" r="0.5" fill="#7a6cd0" opacity="0.44"/>
<circle cx="747.9" cy="797.6" r="0.5" fill="#7a6cd0" opacity="0.65"/>
<circle cx="825.8" cy="790.5" r="0.5" fill="#7a6cd0" opacity="0.75"/>
<circle cx="831.3" cy="793.2" r="1.0" fill="#7a6cd0" opacity="0.60"/>
<circle cx="745.0" cy="810.3" r="0.5" fill="#7a6cd0" opacity="0.49"/>
<circle cx="810.9" cy="822.5" r="0.6" fill="#7a6cd0" opacity="0.46"/>
<circle cx="829.8" cy="739.3" r="1.0" fill="#7a6cd0" opacity="0.89"/>
<circle cx="824.9" cy="723.4" r="0.8" fill="#7a6cd0" opacity="0.74"/>
<circle cx="755.6" cy="743.5" r="0.5" fill="#7a6cd0" opacity="0.44"/>
<circle cx="780.2" cy="752.8" r="0.8" fill="#7a6cd0" opacity="0.47"/>
<circle cx="824.0" cy="841.2" r="0.6" fill="#7a6cd0" opacity="0.40"/>
<circle cx="753.9" cy="727.0" r="0.6" fill="#7a6cd0" opacity="0.66"/>
<circle cx="804.1" cy="765.8" r="0.6" fill="#7a6cd0" opacity="0.86"/>
<circle cx="840.7" cy="817.1" r="0.5" fill="#7a6cd0" opacity="0.82"/>
<circle cx="838.6" cy="716.0" r="0.6" fill="#7a6cd0" opacity="0.82"/>
<circle cx="800.9" cy="827.9" r="0.6" fill="#7a6cd0" opacity="0.71"/>
<circle cx="782.7" cy="745.7" r="0.6" fill="#7a6cd0" opacity="0.53"/>
<circle cx="783.7" cy="758.0" r="0.8" fill="#7a6cd0" opacity="0.59"/>
<circle cx="765.4" cy="733.5" r="1.0" fill="#7a6cd0" opacity="0.78"/>
<circle cx="854.5" cy="843.2" r="0.8" fill="#7a6cd0" opacity="0.54"/>
<circle cx="777.0" cy="766.4" r="0.5" fill="#7a6cd0" opacity="0.57"/>
<circle cx="815.8" cy="759.1" r="0.8" fill="#7a6cd0" opacity="0.40"/>
<circle cx="845.8" cy="743.5" r="0.8" fill="#7a6cd0" opacity="0.80"/>
<circle cx="814.2" cy="725.8" r="0.8" fill="#7a6cd0" opacity="0.61"/>
<circle cx="788.5" cy="720.5" r="0.5" fill="#7a6cd0" opacity="0.88"/>
<circle cx="765.3" cy="782.1" r="0.6" fill="#7a6cd0" opacity="0.87"/>
<circle cx="797.8" cy="832.6" r="0.5" fill="#7a6cd0" opacity="0.72"/>
<circle cx="772.8" cy="811.7" r="0.5" fill="#7a6cd0" opacity="0.76"/>
<circle cx="800.9" cy="727.6" r="0.6" fill="#7a6cd0" opacity="0.71"/>
<circle cx="825.1" cy="734.0" r="0.8" fill="#7a6cd0" opacity="0.78"/>
<circle cx="776.8" cy="745.9" r="0.5" fill="#7a6cd0" opacity="0.45"/>
<circle cx="858.3" cy="796.6" r="0.6" fill="#7a6cd0" opacity="0.73"/>
<circle cx="822.9" cy="803.7" r="0.8" fill="#7a6cd0" opacity="0.44"/>
<circle cx="840.3" cy="782.7" r="0.5" fill="#7a6cd0" opacity="0.58"/>
<circle cx="762.8" cy="726.9" r="1.0" fill="#7a6cd0" opacity="0.72"/>
<circle cx="811.4" cy="827.9" r="1.0" fill="#7a6cd0" opacity="0.49"/>
<circle cx="757.2" cy="752.0" r="1.0" fill="#7a6cd0" opacity="0.75"/>
<circle cx="766.9" cy="842.6" r="0.5" fill="#7a6cd0" opacity="0.83"/>
<circle cx="804.8" cy="754.6" r="0.6" fill="#7a6cd0" opacity="0.42"/>
<circle cx="853.4" cy="741.9" r="0.6" fill="#7a6cd0" opacity="0.80"/>
<circle cx="832.5" cy="748.6" r="0.5" fill="#7a6cd0" opacity="0.82"/>
<circle cx="753.6" cy="723.8" r="0.8" fill="#7a6cd0" opacity="0.73"/>
<circle cx="767.8" cy="731.0" r="0.5" fill="#7a6cd0" opacity="0.82"/>
<circle cx="751.6" cy="745.5" r="0.5" fill="#7a6cd0" opacity="0.68"/>
<circle cx="773.5" cy="720.6" r="0.5" fill="#7a6cd0" opacity="0.53"/>
<circle cx="866.9" cy="835.6" r="0.8" fill="#7a6cd0" opacity="0.58"/>
<circle cx="839.4" cy="730.3" r="0.8" fill="#7a6cd0" opacity="0.59"/>
<circle cx="765.9" cy="799.5" r="0.6" fill="#7a6cd0" opacity="0.85"/>
<circle cx="765.9" cy="812.4" r="0.5" fill="#7a6cd0" opacity="0.51"/>
<circle cx="769.6" cy="740.9" r="1.0" fill="#7a6cd0" opacity="0.83"/>
<circle cx="775.8" cy="829.9" r="0.8" fill="#7a6cd0" opacity="0.83"/>
<circle cx="750.7" cy="799.6" r="0.8" fill="#7a6cd0" opacity="0.52"/>
<circle cx="747.9" cy="769.9" r="0.5" fill="#7a6cd0" opacity="0.45"/>
<circle cx="817.3" cy="777.0" r="1.0" fill="#7a6cd0" opacity="0.46"/>
<circle cx="807.3" cy="734.9" r="0.6" fill="#7a6cd0" opacity="0.61"/>
<circle cx="752.0" cy="737.2" r="0.8" fill="#7a6cd0" opacity="0.58"/>
<circle cx="805.9" cy="835.6" r="0.5" fill="#7a6cd0" opacity="0.44"/>
<circle cx="773.4" cy="810.2" r="1.0" fill="#7a6cd0" opacity="0.46"/>
<circle cx="868.6" cy="781.3" r="0.6" fill="#7a6cd0" opacity="0.66"/>
<circle cx="811.4" cy="753.7" r="0.5" fill="#7a6cd0" opacity="0.44"/>
<circle cx="779.0" cy="834.0" r="1.0" fill="#7a6cd0" opacity="0.79"/>
<circle cx="761.4" cy="818.5" r="0.8" fill="#7a6cd0" opacity="0.45"/>
<circle cx="781.0" cy="816.2" r="0.5" fill="#7a6cd0" opacity="0.46"/>
<circle cx="873.9" cy="775.6" r="0.6" fill="#7a6cd0" opacity="0.65"/>
<circle cx="826.8" cy="819.1" r="0.5" fill="#7a6cd0" opacity="0.72"/>
<circle cx="834.7" cy="716.3" r="0.6" fill="#7a6cd0" opacity="0.79"/>
<circle cx="831.7" cy="730.4" r="0.8" fill="#7a6cd0" opacity="0.47"/>
<circle cx="850.1" cy="836.8" r="0.5" fill="#7a6cd0" opacity="0.83"/>
<circle cx="792.5" cy="831.2" r="0.6" fill="#7a6cd0" opacity="0.75"/>
<circle cx="746.1" cy="772.5" r="0.5" fill="#7a6cd0" opacity="0.62"/>
<circle cx="856.2" cy="749.6" r="0.6" fill="#7a6cd0" opacity="0.82"/>
<circle cx="784.2" cy="753.5" r="0.6" fill="#7a6cd0" opacity="0.87"/>
<circle cx="797.1" cy="801.6" r="0.5" fill="#7a6cd0" opacity="0.58"/>
<circle cx="807.9" cy="720.7" r="0.8" fill="#7a6cd0" opacity="0.66"/>
<circle cx="869.2" cy="777.0" r="0.6" fill="#7a6cd0" opacity="0.71"/>
<circle cx="772.6" cy="822.1" r="0.6" fill="#7a6cd0" opacity="0.55"/>
<circle cx="847.5" cy="747.8" r="0.8" fill="#7a6cd0" opacity="0.42"/>
<circle cx="767.4" cy="766.5" r="0.5" fill="#7a6cd0" opacity="0.68"/>
<circle cx="845.6" cy="743.5" r="0.5" fill="#7a6cd0" opacity="0.48"/>
<circle cx="851.1" cy="792.1" r="1.0" fill="#7a6cd0" opacity="0.68"/>
<circle cx="837.9" cy="730.2" r="0.6" fill="#7a6cd0" opacity="0.68"/>
<circle cx="780.2" cy="766.9" r="0.6" fill="#7a6cd0" opacity="0.90"/>
<circle cx="761.9" cy="754.4" r="0.5" fill="#7a6cd0" opacity="0.48"/>
<circle cx="799.8" cy="722.6" r="1.0" fill="#7a6cd0" opacity="0.80"/>
<circle cx="777.4" cy="787.3" r="0.6" fill="#7a6cd0" opacity="0.83"/>
<circle cx="870.3" cy="747.5" r="1.0" fill="#7a6cd0" opacity="0.45"/>
<circle cx="801.5" cy="820.2" r="0.5" fill="#7a6cd0" opacity="0.85"/>
<circle cx="753.3" cy="811.5" r="0.6" fill="#7a6cd0" opacity="0.84"/>
<circle cx="799.5" cy="781.9" r="0.8" fill="#7a6cd0" opacity="0.80"/>
<circle cx="830.3" cy="779.7" r="0.5" fill="#7a6cd0" opacity="0.62"/>
<circle cx="809.9" cy="782.0" r="0.8" fill="#7a6cd0" opacity="0.85"/>
<circle cx="871.0" cy="737.4" r="0.5" fill="#7a6cd0" opacity="0.70"/>
<circle cx="777.4" cy="762.4" r="0.8" fill="#7a6cd0" opacity="0.72"/>
<circle cx="798.4" cy="838.2" r="0.8" fill="#7a6cd0" opacity="0.74"/>
<circle cx="753.7" cy="809.8" r="1.0" fill="#7a6cd0" opacity="0.51"/>
</g>
<path d="M835 712 C845 706 858 708 866 714 C874 710 885 712 891 716 V790 C870 792 850 785 836 770 C828 760 826 740 835 712 Z" fill="url(#t2str3)"/>
<path d="M691 788 C700 778 718 772 735 774 C742 760 760 748 778 752 C790 744 810 748 816 760 C826 768 830 780 828 792 C810 806 760 806 720 800 C705 798 694 795 691 788 Z" fill="url(#t2cl)"/>
<path d="M691 790 C712 778 760 780 800 786 C815 788 826 796 828 806 C800 810 760 808 720 804 C705 802 694 798 691 790 Z" fill="url(#t2str)"/>
<path d="M728 812 C740 800 770 798 800 804 C812 806 816 814 814 820 C790 824 750 824 728 820 Z" fill="url(#t2str2)"/>
<path d="M781 762 A8.8 8.8 0 0 1 798 762 Z" fill="#f4e6f8"/>
<g stroke="#fffbe8" stroke-linecap="round" fill="none" opacity="0.95">
 <path d="M708 727 H775" stroke-width="2.2"/>
 <path d="M752 739 H788" stroke-width="2"/>
 <path d="M838 824 C860 826 880 828 891 829" stroke-width="2.4"/>
 <path d="M770 792 H805" stroke-width="1.2"/>
</g>
<g stroke="#3a2a70" stroke-width="0.9">
 <path d="M711 708 V721 M704.5 714.5 H717.5 M706.4 709.9 L715.6 719.1 M715.6 709.9 L706.4 719.1"/>
 <path d="M737.6 730 V739 M733 734.5 H742 M734.4 731.3 L740.8 737.7 M740.8 731.3 L734.4 737.7"/>
 <path d="M881.6 807.5 V816.5 M877 812 H886 M878.4 808.8 L884.8 815.2 M884.8 808.8 L878.4 815.2"/>
</g>
<path d="M744 699 L751 707 L745 706 Z M704 748 L712 755 L705 755 Z" fill="#d8c8a8" opacity="0.8"/>
</svg>
<svg class="a" style="left:1008px;top:648px" width="207" height="258" viewBox="1008 648 207 258">
<rect x="1008" y="648" width="207" height="258" fill="#2c6cf0"/>
<g fill="none" stroke="#8cb6f8" stroke-width="1.2" opacity="0.85">
<ellipse cx="1072.8" cy="883.8" rx="8.6" ry="7.7"/>
<ellipse cx="1168.9" cy="893.3" rx="12.1" ry="11.4"/>
<ellipse cx="1072.0" cy="897.4" rx="12.8" ry="10.6"/>
<ellipse cx="1215.6" cy="783.8" rx="8.2" ry="6.9"/>
<ellipse cx="1165.9" cy="738.3" rx="10.7" ry="9.7"/>
<ellipse cx="1109.7" cy="736.7" rx="13.0" ry="12.9"/>
<ellipse cx="1195.1" cy="670.0" rx="9.1" ry="9.7"/>
<ellipse cx="1136.7" cy="811.3" rx="8.8" ry="8.2"/>
<ellipse cx="1073.7" cy="783.9" rx="7.8" ry="8.0"/>
<ellipse cx="1069.8" cy="855.0" rx="10.5" ry="10.6"/>
<ellipse cx="1173.4" cy="744.4" rx="5.9" ry="5.9"/>
<ellipse cx="1064.9" cy="785.8" rx="6.6" ry="5.8"/>
<ellipse cx="1131.5" cy="843.8" rx="8.0" ry="8.4"/>
<ellipse cx="1144.0" cy="683.3" rx="5.5" ry="5.2"/>
<ellipse cx="1147.8" cy="843.2" rx="5.4" ry="5.7"/>
<ellipse cx="1132.2" cy="749.2" rx="9.5" ry="7.7"/>
<ellipse cx="1177.2" cy="861.8" rx="5.7" ry="5.0"/>
<ellipse cx="1038.5" cy="686.3" rx="12.2" ry="12.6"/>
<ellipse cx="1052.5" cy="646.3" rx="5.7" ry="4.7"/>
<ellipse cx="1044.0" cy="764.5" rx="5.6" ry="5.1"/>
<ellipse cx="1064.8" cy="838.1" rx="12.0" ry="10.8"/>
<ellipse cx="1205.8" cy="710.0" rx="7.1" ry="5.8"/>
<ellipse cx="1011.6" cy="898.0" rx="6.1" ry="6.4"/>
<ellipse cx="1073.0" cy="773.0" rx="6.1" ry="6.0"/>
<ellipse cx="1219.7" cy="853.4" rx="11.0" ry="11.6"/>
<ellipse cx="1093.9" cy="718.2" rx="5.1" ry="4.6"/>
<ellipse cx="1016.0" cy="765.2" rx="5.5" ry="4.7"/>
<ellipse cx="1176.2" cy="759.8" rx="8.7" ry="9.1"/>
<ellipse cx="1138.2" cy="858.6" rx="8.8" ry="8.2"/>
<ellipse cx="1002.9" cy="887.4" rx="6.7" ry="7.1"/>
<ellipse cx="1101.5" cy="839.0" rx="9.0" ry="8.6"/>
<ellipse cx="1073.7" cy="655.1" rx="6.8" ry="5.5"/>
<ellipse cx="1113.8" cy="696.0" rx="10.7" ry="10.1"/>
<ellipse cx="1042.7" cy="688.7" rx="12.9" ry="14.2"/>
<ellipse cx="1199.5" cy="674.8" rx="5.5" ry="5.2"/>
<ellipse cx="1075.2" cy="826.6" rx="10.4" ry="10.6"/>
<ellipse cx="1178.7" cy="745.1" rx="9.2" ry="8.2"/>
<ellipse cx="1172.0" cy="723.6" rx="7.3" ry="6.6"/>
<ellipse cx="1052.5" cy="686.5" rx="10.0" ry="8.8"/>
<ellipse cx="1006.7" cy="725.0" rx="11.3" ry="11.5"/>
<ellipse cx="1193.1" cy="821.7" rx="8.8" ry="7.9"/>
<ellipse cx="1016.6" cy="814.6" rx="10.0" ry="9.3"/>
<ellipse cx="1014.8" cy="852.9" rx="9.1" ry="8.5"/>
<ellipse cx="1189.2" cy="888.6" rx="8.3" ry="8.4"/>
<ellipse cx="1118.8" cy="846.6" rx="10.8" ry="9.7"/>
<ellipse cx="1011.3" cy="843.8" rx="5.7" ry="6.1"/>
<ellipse cx="1029.5" cy="867.4" rx="12.5" ry="12.1"/>
<ellipse cx="1014.0" cy="821.3" rx="5.3" ry="5.3"/>
<ellipse cx="1189.2" cy="815.0" rx="7.7" ry="7.4"/>
<ellipse cx="1032.2" cy="824.8" rx="10.7" ry="11.0"/>
<ellipse cx="1007.1" cy="881.1" rx="10.4" ry="9.9"/>
<ellipse cx="1155.4" cy="723.7" rx="11.5" ry="11.3"/>
<ellipse cx="1090.2" cy="703.5" rx="8.1" ry="8.4"/>
<ellipse cx="1157.2" cy="736.0" rx="12.1" ry="11.4"/>
<ellipse cx="1122.5" cy="664.3" rx="12.5" ry="13.6"/>
<ellipse cx="1159.9" cy="742.5" rx="6.8" ry="5.8"/>
<ellipse cx="1180.0" cy="841.1" rx="8.1" ry="7.0"/>
<ellipse cx="1174.8" cy="838.5" rx="12.3" ry="11.7"/>
<ellipse cx="1192.6" cy="776.0" rx="11.4" ry="9.2"/>
<ellipse cx="1113.8" cy="855.7" rx="10.6" ry="11.5"/>
<ellipse cx="1136.6" cy="723.1" rx="10.8" ry="11.4"/>
<ellipse cx="1151.5" cy="814.8" rx="5.5" ry="4.4"/>
<ellipse cx="1051.4" cy="731.1" rx="11.3" ry="9.9"/>
<ellipse cx="1008.7" cy="649.9" rx="13.0" ry="11.3"/>
<ellipse cx="1070.5" cy="873.5" rx="12.6" ry="11.2"/>
<ellipse cx="1137.2" cy="744.5" rx="7.3" ry="7.9"/>
<ellipse cx="1002.8" cy="819.1" rx="11.1" ry="11.4"/>
<ellipse cx="1125.9" cy="881.6" rx="11.5" ry="11.5"/>
<ellipse cx="1011.6" cy="875.7" rx="6.4" ry="5.4"/>
<ellipse cx="1068.1" cy="773.7" rx="7.6" ry="7.1"/>
<ellipse cx="1068.2" cy="703.5" rx="10.7" ry="10.7"/>
<ellipse cx="1012.2" cy="877.4" rx="6.4" ry="5.7"/>
<ellipse cx="1171.9" cy="867.2" rx="12.6" ry="13.4"/>
<ellipse cx="1120.5" cy="881.4" rx="11.3" ry="11.9"/>
<ellipse cx="1217.4" cy="890.7" rx="8.8" ry="8.2"/>
<ellipse cx="1166.3" cy="861.9" rx="10.8" ry="9.8"/>
<ellipse cx="1014.2" cy="671.4" rx="12.1" ry="13.0"/>
<ellipse cx="1005.7" cy="738.1" rx="9.9" ry="9.4"/>
<ellipse cx="1011.7" cy="867.9" rx="10.1" ry="9.0"/>
<ellipse cx="1105.8" cy="740.2" rx="10.1" ry="10.8"/>
<ellipse cx="1128.0" cy="724.4" rx="7.8" ry="8.2"/>
<ellipse cx="1164.1" cy="733.4" rx="12.3" ry="12.1"/>
<ellipse cx="1221.5" cy="877.4" rx="5.5" ry="5.2"/>
<ellipse cx="1002.6" cy="893.3" rx="6.8" ry="5.9"/>
<ellipse cx="1120.5" cy="885.8" rx="10.3" ry="10.9"/>
<ellipse cx="1145.4" cy="790.6" rx="8.7" ry="8.4"/>
<ellipse cx="1005.2" cy="674.7" rx="13.0" ry="11.1"/>
<ellipse cx="1064.6" cy="776.5" rx="11.0" ry="9.1"/>
<ellipse cx="1176.2" cy="800.0" rx="5.5" ry="5.0"/>
<ellipse cx="1209.2" cy="835.5" rx="6.3" ry="6.2"/>
<ellipse cx="1017.1" cy="750.5" rx="7.6" ry="8.4"/>
<ellipse cx="1114.5" cy="897.7" rx="8.9" ry="9.2"/>
<ellipse cx="1002.4" cy="870.9" rx="9.8" ry="9.0"/>
<ellipse cx="1184.6" cy="878.5" rx="6.3" ry="5.1"/>
<ellipse cx="1144.1" cy="872.9" rx="5.9" ry="5.7"/>
<ellipse cx="1011.9" cy="654.7" rx="9.0" ry="9.7"/>
<ellipse cx="1189.0" cy="829.3" rx="10.7" ry="9.3"/>
<ellipse cx="1102.7" cy="680.9" rx="6.7" ry="5.7"/>
<ellipse cx="1097.3" cy="648.1" rx="6.1" ry="6.1"/>
<ellipse cx="1134.1" cy="702.0" rx="6.7" ry="6.7"/>
<ellipse cx="1012.0" cy="845.1" rx="11.4" ry="12.2"/>
<ellipse cx="1036.7" cy="847.4" rx="9.3" ry="8.1"/>
<ellipse cx="1182.5" cy="701.5" rx="6.4" ry="6.8"/>
<ellipse cx="1216.7" cy="831.2" rx="5.9" ry="5.5"/>
<ellipse cx="1131.9" cy="697.2" rx="11.7" ry="10.8"/>
<ellipse cx="1113.4" cy="769.4" rx="5.0" ry="5.3"/>
<ellipse cx="1192.8" cy="877.9" rx="9.5" ry="8.8"/>
<ellipse cx="1071.0" cy="685.5" rx="6.7" ry="6.5"/>
<ellipse cx="1090.6" cy="831.2" rx="13.0" ry="11.3"/>
<ellipse cx="1193.0" cy="734.5" rx="8.5" ry="7.6"/>
<ellipse cx="1141.0" cy="758.1" rx="6.1" ry="6.0"/>
<ellipse cx="1027.6" cy="718.5" rx="8.3" ry="8.8"/>
<ellipse cx="1170.7" cy="796.9" rx="8.8" ry="7.8"/>
<ellipse cx="1115.1" cy="765.0" rx="9.1" ry="8.6"/>
<ellipse cx="1051.7" cy="733.2" rx="8.1" ry="6.6"/>
<ellipse cx="1022.3" cy="834.5" rx="7.7" ry="7.8"/>
<ellipse cx="1186.5" cy="811.1" rx="8.7" ry="9.2"/>
<ellipse cx="1121.6" cy="651.0" rx="11.3" ry="10.6"/>
<ellipse cx="1113.0" cy="828.7" rx="10.4" ry="11.3"/>
<ellipse cx="1137.6" cy="681.5" rx="10.2" ry="10.5"/>
<ellipse cx="1000.9" cy="821.9" rx="10.0" ry="10.0"/>
<ellipse cx="1088.5" cy="726.6" rx="9.6" ry="8.3"/>
<ellipse cx="1177.8" cy="681.4" rx="9.4" ry="9.4"/>
<ellipse cx="1063.4" cy="676.0" rx="12.2" ry="13.4"/>
<ellipse cx="1136.8" cy="853.7" rx="8.5" ry="7.5"/>
<ellipse cx="1115.8" cy="645.3" rx="9.4" ry="9.7"/>
<ellipse cx="1072.2" cy="888.6" rx="5.9" ry="5.2"/>
<ellipse cx="1135.4" cy="789.8" rx="11.9" ry="9.5"/>
<ellipse cx="1177.6" cy="657.8" rx="11.5" ry="11.4"/>
<ellipse cx="1002.7" cy="876.2" rx="7.3" ry="6.9"/>
<ellipse cx="1208.5" cy="740.0" rx="5.6" ry="4.8"/>
<ellipse cx="1163.6" cy="677.3" rx="7.5" ry="6.5"/>
<ellipse cx="1096.9" cy="672.3" rx="12.8" ry="13.7"/>
<ellipse cx="1023.8" cy="678.1" rx="9.4" ry="10.3"/>
<ellipse cx="1171.6" cy="679.4" rx="11.7" ry="9.5"/>
<ellipse cx="1110.3" cy="833.5" rx="8.4" ry="8.3"/>
<ellipse cx="1157.4" cy="687.6" rx="6.0" ry="5.4"/>
<ellipse cx="1018.7" cy="682.5" rx="5.3" ry="4.8"/>
<ellipse cx="1154.2" cy="684.6" rx="8.7" ry="7.2"/>
<ellipse cx="1043.8" cy="734.8" rx="12.5" ry="10.8"/>
<ellipse cx="1026.8" cy="867.1" rx="7.6" ry="7.0"/>
<ellipse cx="1099.0" cy="768.0" rx="5.2" ry="5.2"/>
<ellipse cx="1199.8" cy="683.9" rx="12.1" ry="12.6"/>
<ellipse cx="1139.0" cy="813.6" rx="8.6" ry="8.5"/>
<ellipse cx="1201.0" cy="847.5" rx="9.4" ry="10.0"/>
<ellipse cx="1003.1" cy="756.3" rx="5.2" ry="5.1"/>
<ellipse cx="1146.6" cy="775.5" rx="6.2" ry="5.0"/>
<ellipse cx="1174.6" cy="776.9" rx="9.0" ry="9.0"/>
<ellipse cx="1034.8" cy="811.2" rx="9.0" ry="9.7"/>
<ellipse cx="1155.8" cy="888.8" rx="11.8" ry="10.7"/>
<ellipse cx="1156.6" cy="690.1" rx="8.0" ry="8.0"/>
<ellipse cx="1074.1" cy="767.1" rx="9.6" ry="10.5"/>
<ellipse cx="1035.8" cy="877.2" rx="6.5" ry="7.2"/>
<ellipse cx="1046.8" cy="816.0" rx="9.9" ry="7.9"/>
<ellipse cx="1128.7" cy="726.5" rx="10.1" ry="9.8"/>
<ellipse cx="1177.8" cy="729.3" rx="9.6" ry="9.2"/>
<ellipse cx="1211.4" cy="867.5" rx="12.9" ry="12.2"/>
<ellipse cx="1184.0" cy="652.3" rx="8.4" ry="6.9"/>
<ellipse cx="1092.0" cy="717.9" rx="9.1" ry="9.2"/>
<ellipse cx="1001.0" cy="796.1" rx="6.1" ry="5.5"/>
<ellipse cx="1194.6" cy="800.6" rx="8.5" ry="9.0"/>
<ellipse cx="1179.7" cy="661.6" rx="8.6" ry="7.8"/>
<ellipse cx="1007.9" cy="861.1" rx="7.4" ry="6.1"/>
<ellipse cx="1057.3" cy="847.2" rx="6.6" ry="6.3"/>
<ellipse cx="1111.2" cy="779.7" rx="11.2" ry="11.2"/>
<ellipse cx="1143.7" cy="713.6" rx="10.1" ry="9.1"/>
<ellipse cx="1151.7" cy="824.8" rx="12.7" ry="10.3"/>
<ellipse cx="1185.6" cy="855.0" rx="7.4" ry="7.2"/>
<ellipse cx="1192.0" cy="835.3" rx="12.5" ry="11.3"/>
<ellipse cx="1189.0" cy="867.3" rx="7.1" ry="6.7"/>
<ellipse cx="1098.8" cy="646.8" rx="5.7" ry="5.9"/>
<ellipse cx="1196.1" cy="697.1" rx="9.8" ry="10.4"/>
<ellipse cx="1017.9" cy="717.1" rx="11.7" ry="11.5"/>
<ellipse cx="1212.4" cy="811.0" rx="11.1" ry="11.0"/>
<ellipse cx="1186.1" cy="709.0" rx="6.3" ry="6.8"/>
<ellipse cx="1049.5" cy="867.3" rx="6.8" ry="6.0"/>
<ellipse cx="1013.5" cy="682.7" rx="13.0" ry="11.6"/>
<ellipse cx="1220.6" cy="656.7" rx="8.1" ry="8.0"/>
<ellipse cx="1214.9" cy="696.2" rx="8.3" ry="7.8"/>
<ellipse cx="1069.4" cy="656.0" rx="8.1" ry="8.0"/>
<ellipse cx="1106.8" cy="780.5" rx="6.6" ry="5.8"/>
<ellipse cx="1115.6" cy="671.7" rx="7.5" ry="8.1"/>
<ellipse cx="1203.1" cy="878.2" rx="8.8" ry="9.5"/>
<ellipse cx="1125.0" cy="666.2" rx="9.0" ry="9.8"/>
<ellipse cx="1072.9" cy="730.8" rx="5.8" ry="5.3"/>
<ellipse cx="1024.9" cy="897.0" rx="9.0" ry="8.0"/>
<ellipse cx="1073.3" cy="793.1" rx="6.4" ry="6.6"/>
<ellipse cx="1070.6" cy="761.4" rx="12.7" ry="11.9"/>
<ellipse cx="1082.0" cy="846.2" rx="12.5" ry="12.6"/>
<ellipse cx="1106.7" cy="886.3" rx="6.6" ry="7.2"/>
<ellipse cx="1147.6" cy="686.3" rx="6.5" ry="5.6"/>
<ellipse cx="1065.1" cy="828.1" rx="10.7" ry="10.4"/>
<ellipse cx="1093.3" cy="695.6" rx="5.6" ry="5.3"/>
<ellipse cx="1147.1" cy="839.6" rx="6.9" ry="5.7"/>
<ellipse cx="1063.6" cy="666.7" rx="6.5" ry="6.4"/>
<ellipse cx="1148.2" cy="710.6" rx="12.8" ry="10.6"/>
<ellipse cx="1062.3" cy="877.2" rx="10.5" ry="10.1"/>
<ellipse cx="1077.7" cy="828.2" rx="9.3" ry="7.9"/>
<ellipse cx="1127.2" cy="901.9" rx="12.2" ry="10.6"/>
<ellipse cx="1046.7" cy="672.2" rx="9.7" ry="9.9"/>
<ellipse cx="1212.3" cy="818.8" rx="8.1" ry="8.9"/>
<ellipse cx="1006.0" cy="798.1" rx="10.6" ry="9.8"/>
<ellipse cx="1184.2" cy="876.5" rx="9.1" ry="8.5"/>
<ellipse cx="1193.3" cy="645.8" rx="5.2" ry="4.3"/>
<ellipse cx="1094.9" cy="780.8" rx="8.1" ry="7.4"/>
<ellipse cx="1081.1" cy="675.4" rx="12.4" ry="11.3"/>
<ellipse cx="1120.7" cy="683.1" rx="6.2" ry="5.2"/>
<ellipse cx="1176.9" cy="673.1" rx="7.5" ry="7.3"/>
<ellipse cx="1021.3" cy="771.6" rx="8.7" ry="8.9"/>
<ellipse cx="1161.5" cy="702.6" rx="6.1" ry="6.6"/>
<ellipse cx="1001.3" cy="877.3" rx="7.9" ry="8.1"/>
<ellipse cx="1185.3" cy="796.1" rx="8.4" ry="8.0"/>
<ellipse cx="1009.2" cy="898.5" rx="12.9" ry="10.5"/>
<ellipse cx="1219.3" cy="703.3" rx="5.3" ry="5.7"/>
<ellipse cx="1044.0" cy="708.8" rx="11.2" ry="11.5"/>
<ellipse cx="1075.2" cy="660.9" rx="11.0" ry="9.1"/>
<ellipse cx="1172.9" cy="758.4" rx="10.5" ry="8.9"/>
<ellipse cx="1095.9" cy="886.9" rx="5.8" ry="5.6"/>
<ellipse cx="1206.1" cy="795.6" rx="9.0" ry="9.9"/>
<ellipse cx="1163.2" cy="836.7" rx="11.5" ry="12.0"/>
<ellipse cx="1063.2" cy="650.5" rx="5.4" ry="5.1"/>
<ellipse cx="1166.1" cy="690.7" rx="8.2" ry="7.2"/>
<ellipse cx="1046.5" cy="708.6" rx="8.6" ry="7.5"/>
<ellipse cx="1103.7" cy="825.9" rx="10.3" ry="8.5"/>
<ellipse cx="1090.6" cy="782.1" rx="7.3" ry="6.6"/>
<ellipse cx="1055.1" cy="815.3" rx="7.6" ry="6.2"/>
<ellipse cx="1092.5" cy="863.8" rx="5.6" ry="4.6"/>
<ellipse cx="1012.6" cy="690.9" rx="7.1" ry="7.0"/>
<ellipse cx="1084.9" cy="820.3" rx="7.0" ry="5.8"/>
<ellipse cx="1205.3" cy="789.1" rx="8.6" ry="7.0"/>
<ellipse cx="1130.8" cy="876.3" rx="6.0" ry="4.9"/>
<ellipse cx="1097.1" cy="814.9" rx="5.2" ry="4.4"/>
<ellipse cx="1218.7" cy="830.7" rx="11.3" ry="11.7"/>
<ellipse cx="1016.6" cy="852.5" rx="6.9" ry="6.0"/>
<ellipse cx="1210.6" cy="711.1" rx="6.4" ry="6.7"/>
<ellipse cx="1090.3" cy="859.3" rx="6.3" ry="5.9"/>
<ellipse cx="1039.9" cy="675.0" rx="9.4" ry="8.7"/>
<ellipse cx="1052.2" cy="880.4" rx="10.3" ry="9.0"/>
<ellipse cx="1026.0" cy="854.1" rx="5.7" ry="5.0"/>
<ellipse cx="1034.0" cy="871.6" rx="5.7" ry="5.1"/>
<ellipse cx="1131.0" cy="864.4" rx="11.0" ry="10.6"/>
<ellipse cx="1207.4" cy="757.1" rx="12.6" ry="13.1"/>
<ellipse cx="1186.3" cy="781.3" rx="7.5" ry="6.5"/>
<ellipse cx="1161.5" cy="673.5" rx="7.8" ry="7.6"/>
<ellipse cx="1219.7" cy="804.2" rx="10.3" ry="8.6"/>
<ellipse cx="1005.0" cy="753.9" rx="9.8" ry="8.0"/>
<ellipse cx="1065.1" cy="671.5" rx="10.0" ry="9.4"/>
<ellipse cx="1083.2" cy="766.2" rx="10.6" ry="11.3"/>
<ellipse cx="1120.4" cy="784.2" rx="7.3" ry="7.7"/>
<ellipse cx="1007.1" cy="708.1" rx="7.6" ry="7.6"/>
<ellipse cx="1161.9" cy="868.5" rx="10.7" ry="10.0"/>
<ellipse cx="1019.1" cy="735.5" rx="10.2" ry="10.7"/>
<ellipse cx="1218.3" cy="754.5" rx="10.9" ry="9.5"/>
<ellipse cx="1081.4" cy="644.4" rx="9.4" ry="8.5"/>
<ellipse cx="1090.9" cy="755.9" rx="9.9" ry="10.5"/>
<ellipse cx="1192.8" cy="721.0" rx="11.4" ry="10.2"/>
<ellipse cx="1104.8" cy="830.7" rx="10.9" ry="9.3"/>
<ellipse cx="1022.7" cy="692.2" rx="12.2" ry="9.9"/>
<ellipse cx="1029.1" cy="729.8" rx="8.4" ry="9.1"/>
<ellipse cx="1064.1" cy="681.2" rx="6.2" ry="6.2"/>
<ellipse cx="1158.2" cy="733.3" rx="5.5" ry="5.5"/>
<ellipse cx="1054.5" cy="649.7" rx="6.4" ry="5.2"/>
<ellipse cx="1094.1" cy="680.4" rx="11.3" ry="10.7"/>
<ellipse cx="1024.7" cy="712.0" rx="9.1" ry="10.0"/>
<ellipse cx="1219.4" cy="901.5" rx="8.1" ry="7.0"/>
<ellipse cx="1173.6" cy="835.0" rx="5.9" ry="5.3"/>
<ellipse cx="1028.1" cy="649.3" rx="10.7" ry="9.3"/>
<ellipse cx="1128.6" cy="791.8" rx="6.9" ry="5.7"/>
<ellipse cx="1157.2" cy="865.0" rx="6.9" ry="6.5"/>
<ellipse cx="1171.4" cy="873.7" rx="6.0" ry="5.8"/>
<ellipse cx="1114.6" cy="865.4" rx="5.7" ry="5.4"/>
<ellipse cx="1052.7" cy="756.7" rx="12.9" ry="13.9"/>
<ellipse cx="1003.4" cy="700.5" rx="7.7" ry="7.0"/>
<ellipse cx="1145.2" cy="751.9" rx="7.7" ry="6.7"/>
<ellipse cx="1140.7" cy="777.7" rx="9.4" ry="8.4"/>
<ellipse cx="1104.2" cy="829.2" rx="8.7" ry="7.0"/>
<ellipse cx="1147.3" cy="762.4" rx="9.8" ry="8.3"/>
<ellipse cx="1133.0" cy="764.4" rx="12.6" ry="10.7"/>
<ellipse cx="1212.3" cy="899.4" rx="11.1" ry="11.3"/>
<ellipse cx="1208.4" cy="872.7" rx="7.5" ry="7.9"/>
<ellipse cx="1153.9" cy="657.9" rx="12.2" ry="10.5"/>
<ellipse cx="1001.1" cy="748.7" rx="8.6" ry="9.3"/>
<ellipse cx="1077.2" cy="737.6" rx="10.7" ry="8.9"/>
<ellipse cx="1117.2" cy="670.2" rx="7.3" ry="7.0"/>
<ellipse cx="1048.9" cy="742.7" rx="11.8" ry="11.6"/>
<ellipse cx="1124.2" cy="712.6" rx="11.1" ry="10.9"/>
<ellipse cx="1159.1" cy="863.5" rx="7.9" ry="8.7"/>
<ellipse cx="1142.5" cy="676.5" rx="10.4" ry="8.7"/>
<ellipse cx="1035.8" cy="646.0" rx="12.2" ry="10.6"/>
<ellipse cx="1000.8" cy="904.6" rx="6.6" ry="6.3"/>
<ellipse cx="1080.1" cy="708.5" rx="6.4" ry="6.5"/>
<ellipse cx="1036.5" cy="883.0" rx="11.5" ry="9.4"/>
<ellipse cx="1083.6" cy="875.2" rx="7.6" ry="7.0"/>
<ellipse cx="1009.4" cy="784.6" rx="11.4" ry="11.0"/>
<ellipse cx="1015.0" cy="686.2" rx="6.5" ry="6.8"/>
<ellipse cx="1111.4" cy="826.1" rx="11.2" ry="11.1"/>
<ellipse cx="1193.1" cy="717.0" rx="9.3" ry="9.4"/>
<ellipse cx="1162.7" cy="669.5" rx="7.2" ry="6.4"/>
<ellipse cx="1044.6" cy="898.0" rx="11.3" ry="12.2"/>
<ellipse cx="1185.0" cy="818.0" rx="10.9" ry="9.8"/>
</g>
<path d="M1150 677 L1172 678 L1178 692 L1184 701 L1180 706 L1180 712 L1150 714 Z" fill="#e8a73a"/>
<path d="M1150 700 L1176 702 L1170 712 L1175 720 L1165 726 L1150 728 Z" fill="#0a0a0a"/>
<path d="M1150 724 L1168 726 L1163 745 L1160 765 L1150 768 Z" fill="#3cc040"/>
<path d="M1150 826 C1175 830 1195 845 1215 868 V906 H1150 Z" fill="#000"/>
<path d="M1150 842 C1175 844 1195 850 1203 858 L1200 862 C1185 862 1165 858 1150 856 Z" fill="#e8a73a"/>
<path d="M1150 857 C1170 860 1188 862 1200 862 L1196 865 C1180 865 1165 863 1150 861 Z" fill="#f4f0e0"/>
</svg>
<svg class="a" style="left:1289px;top:681px" width="257" height="193" viewBox="1289 681 257 193">
<defs>
 <linearGradient id="t4sky" x1="0" y1="0" x2="0" y2="1"><stop offset="0" stop-color="#02050d"/><stop offset="0.35" stop-color="#060c22"/><stop offset="0.6" stop-color="#0c1a48"/><stop offset="0.75" stop-color="#15286a"/></linearGradient>
 <radialGradient id="t4glow" cx="0.3" cy="0.8" r="0.7"><stop offset="0" stop-color="#b8f0b0"/><stop offset="0.3" stop-color="#5ab8a0"/><stop offset="0.6" stop-color="#2a6a88" stop-opacity="0.7"/><stop offset="1" stop-color="#102050" stop-opacity="0"/></radialGradient>
 <linearGradient id="t4st" x1="0" y1="0" x2="0" y2="1"><stop offset="0" stop-color="#24464e"/><stop offset="0.5" stop-color="#18343c"/><stop offset="1" stop-color="#0e222a"/></linearGradient>
 <linearGradient id="t4wall" x1="0" y1="0" x2="0" y2="1"><stop offset="0" stop-color="#34403e"/><stop offset="0.6" stop-color="#263232"/><stop offset="1" stop-color="#182224"/></linearGradient>
 <filter id="t4b" x="-50%" y="-50%" width="200%" height="200%"><feGaussianBlur stdDeviation="1.5"/></filter>
 <filter id="t4b3" x="-50%" y="-50%" width="200%" height="200%"><feGaussianBlur stdDeviation="4"/></filter>
</defs>
<rect x="1289" y="681" width="257" height="193" fill="url(#t4sky)"/>
<path d="M1372 752 C1392 752 1412 770 1428 795 L1432 812 L1372 815 Z" fill="url(#t4glow)" filter="url(#t4b3)"/>
<ellipse cx="1392" cy="788" rx="18" ry="9" transform="rotate(28 1392 788)" fill="#b8f0c0" opacity="0.55" filter="url(#t4b3)"/>
<ellipse cx="1385" cy="745" rx="22" ry="18" fill="#3a5aa0" opacity="0.3" filter="url(#t4b3)"/>

<circle cx="1371.9" cy="766.2" r="0.45" fill="#c8e0ff" opacity="0.60"/>
<circle cx="1395.2" cy="724.8" r="0.45" fill="#c8e0ff" opacity="0.34"/>
<circle cx="1416.5" cy="719.8" r="0.45" fill="#c8e0ff" opacity="0.67"/>
<circle cx="1397.6" cy="756.3" r="0.45" fill="#c8e0ff" opacity="0.61"/>
<circle cx="1373.1" cy="763.4" r="0.45" fill="#c8e0ff" opacity="0.34"/>
<circle cx="1414.8" cy="772.0" r="0.45" fill="#c8e0ff" opacity="0.31"/>
<circle cx="1399.0" cy="728.8" r="0.45" fill="#c8e0ff" opacity="0.35"/>
<circle cx="1410.4" cy="742.2" r="0.45" fill="#c8e0ff" opacity="0.44"/>
<circle cx="1375.0" cy="733.8" r="0.45" fill="#c8e0ff" opacity="0.68"/>
<circle cx="1398.2" cy="722.9" r="0.45" fill="#c8e0ff" opacity="0.52"/>
<circle cx="1415.0" cy="716.3" r="0.45" fill="#c8e0ff" opacity="0.73"/>
<circle cx="1367.8" cy="757.1" r="0.45" fill="#c8e0ff" opacity="0.70"/>
<circle cx="1381.5" cy="759.1" r="0.45" fill="#c8e0ff" opacity="0.35"/>
<circle cx="1376.3" cy="772.7" r="0.45" fill="#c8e0ff" opacity="0.66"/>
<circle cx="1418.4" cy="748.2" r="0.45" fill="#c8e0ff" opacity="0.30"/>
<circle cx="1368.2" cy="732.2" r="0.45" fill="#c8e0ff" opacity="0.48"/>
<circle cx="1417.2" cy="754.7" r="0.45" fill="#c8e0ff" opacity="0.59"/>
<circle cx="1398.0" cy="768.0" r="0.45" fill="#c8e0ff" opacity="0.53"/>
<circle cx="1394.9" cy="737.6" r="0.45" fill="#c8e0ff" opacity="0.78"/>
<circle cx="1410.6" cy="771.4" r="0.45" fill="#c8e0ff" opacity="0.43"/>
<circle cx="1379.9" cy="772.2" r="0.45" fill="#c8e0ff" opacity="0.61"/>
<circle cx="1372.3" cy="733.3" r="0.45" fill="#c8e0ff" opacity="0.33"/>
<circle cx="1370.2" cy="741.4" r="0.45" fill="#c8e0ff" opacity="0.77"/>
<circle cx="1390.4" cy="735.9" r="0.45" fill="#c8e0ff" opacity="0.59"/>
<circle cx="1399.3" cy="761.0" r="0.45" fill="#c8e0ff" opacity="0.78"/>
<circle cx="1403.9" cy="739.1" r="0.45" fill="#c8e0ff" opacity="0.40"/>
<circle cx="1392.3" cy="769.7" r="0.45" fill="#c8e0ff" opacity="0.86"/>
<circle cx="1373.6" cy="760.9" r="0.45" fill="#c8e0ff" opacity="0.56"/>
<circle cx="1375.2" cy="773.2" r="0.45" fill="#c8e0ff" opacity="0.43"/>
<circle cx="1417.1" cy="754.2" r="0.45" fill="#c8e0ff" opacity="0.45"/>
<circle cx="1396.4" cy="769.0" r="0.45" fill="#c8e0ff" opacity="0.46"/>
<circle cx="1384.2" cy="722.3" r="0.45" fill="#c8e0ff" opacity="0.47"/>
<circle cx="1397.6" cy="765.5" r="0.45" fill="#c8e0ff" opacity="0.49"/>
<circle cx="1409.4" cy="767.3" r="0.45" fill="#c8e0ff" opacity="0.48"/>
<circle cx="1408.6" cy="723.3" r="0.45" fill="#c8e0ff" opacity="0.63"/>
<circle cx="1396.0" cy="768.8" r="0.45" fill="#c8e0ff" opacity="0.72"/>
<circle cx="1374.3" cy="755.3" r="0.45" fill="#c8e0ff" opacity="0.36"/>
<circle cx="1418.4" cy="741.1" r="0.45" fill="#c8e0ff" opacity="0.58"/>
<circle cx="1410.9" cy="757.8" r="0.45" fill="#c8e0ff" opacity="0.56"/>
<circle cx="1411.6" cy="724.4" r="0.45" fill="#c8e0ff" opacity="0.40"/>
<circle cx="1414.3" cy="734.1" r="0.45" fill="#c8e0ff" opacity="0.69"/>
<circle cx="1388.9" cy="731.7" r="0.45" fill="#c8e0ff" opacity="0.36"/>
<circle cx="1404.7" cy="765.4" r="0.45" fill="#c8e0ff" opacity="0.40"/>
<circle cx="1397.3" cy="726.6" r="0.45" fill="#c8e0ff" opacity="0.69"/>
<circle cx="1391.7" cy="720.9" r="0.45" fill="#c8e0ff" opacity="0.89"/>
<circle cx="1412.9" cy="741.7" r="0.45" fill="#c8e0ff" opacity="0.83"/>
<circle cx="1400.5" cy="721.1" r="0.45" fill="#c8e0ff" opacity="0.56"/>
<circle cx="1411.8" cy="774.2" r="0.45" fill="#c8e0ff" opacity="0.68"/>
<circle cx="1397.7" cy="771.4" r="0.45" fill="#c8e0ff" opacity="0.40"/>
<circle cx="1384.1" cy="721.3" r="0.45" fill="#c8e0ff" opacity="0.78"/>
<circle cx="1418.9" cy="724.5" r="0.45" fill="#c8e0ff" opacity="0.48"/>
<circle cx="1378.9" cy="763.7" r="0.45" fill="#c8e0ff" opacity="0.78"/>
<circle cx="1368.3" cy="749.4" r="0.45" fill="#c8e0ff" opacity="0.84"/>
<circle cx="1375.9" cy="727.3" r="0.45" fill="#c8e0ff" opacity="0.45"/>
<circle cx="1410.8" cy="730.8" r="0.45" fill="#c8e0ff" opacity="0.41"/>
<circle cx="1365.0" cy="770.1" r="0.45" fill="#c8e0ff" opacity="0.43"/>
<circle cx="1378.3" cy="767.7" r="0.45" fill="#c8e0ff" opacity="0.55"/>
<circle cx="1406.5" cy="766.8" r="0.45" fill="#c8e0ff" opacity="0.37"/>
<circle cx="1406.2" cy="742.1" r="0.45" fill="#c8e0ff" opacity="0.59"/>
<circle cx="1366.3" cy="728.5" r="0.45" fill="#c8e0ff" opacity="0.51"/>
<circle cx="1382.2" cy="738.3" r="0.45" fill="#c8e0ff" opacity="0.69"/>
<circle cx="1394.3" cy="728.4" r="0.45" fill="#c8e0ff" opacity="0.55"/>
<circle cx="1399.0" cy="763.5" r="0.45" fill="#c8e0ff" opacity="0.75"/>
<circle cx="1402.2" cy="750.1" r="0.45" fill="#c8e0ff" opacity="0.62"/>
<circle cx="1406.7" cy="731.5" r="0.45" fill="#c8e0ff" opacity="0.80"/>
<circle cx="1414.8" cy="764.3" r="0.45" fill="#c8e0ff" opacity="0.43"/>
<circle cx="1367.7" cy="727.9" r="0.45" fill="#c8e0ff" opacity="0.87"/>
<circle cx="1414.6" cy="774.7" r="0.45" fill="#c8e0ff" opacity="0.61"/>
<circle cx="1371.5" cy="756.1" r="0.45" fill="#c8e0ff" opacity="0.84"/>
<circle cx="1388.7" cy="715.5" r="0.45" fill="#c8e0ff" opacity="0.46"/>
<circle cx="1391.9" cy="724.5" r="0.45" fill="#c8e0ff" opacity="0.42"/>
<circle cx="1410.0" cy="767.5" r="0.45" fill="#c8e0ff" opacity="0.56"/>
<circle cx="1400.0" cy="771.0" r="0.45" fill="#c8e0ff" opacity="0.39"/>
<circle cx="1386.6" cy="715.2" r="0.45" fill="#c8e0ff" opacity="0.48"/>
<circle cx="1386.0" cy="758.2" r="0.45" fill="#c8e0ff" opacity="0.61"/>
<circle cx="1377.7" cy="719.1" r="0.45" fill="#c8e0ff" opacity="0.33"/>
<circle cx="1369.3" cy="717.6" r="0.45" fill="#c8e0ff" opacity="0.48"/>
<circle cx="1408.8" cy="756.3" r="0.45" fill="#c8e0ff" opacity="0.40"/>
<circle cx="1370.0" cy="753.5" r="0.45" fill="#c8e0ff" opacity="0.90"/>
<circle cx="1381.4" cy="761.8" r="0.45" fill="#c8e0ff" opacity="0.85"/>
<circle cx="1403.8" cy="752.0" r="0.45" fill="#c8e0ff" opacity="0.68"/>
<circle cx="1405.7" cy="768.7" r="0.45" fill="#c8e0ff" opacity="0.37"/>
<circle cx="1390.5" cy="744.2" r="0.45" fill="#c8e0ff" opacity="0.57"/>
<circle cx="1370.9" cy="770.5" r="0.45" fill="#c8e0ff" opacity="0.53"/>
<circle cx="1376.0" cy="743.8" r="0.45" fill="#c8e0ff" opacity="0.73"/>
<circle cx="1385.8" cy="746.1" r="0.45" fill="#c8e0ff" opacity="0.63"/>
<circle cx="1410.9" cy="750.2" r="0.45" fill="#c8e0ff" opacity="0.69"/>
<circle cx="1379.4" cy="770.5" r="0.45" fill="#c8e0ff" opacity="0.39"/>
<circle cx="1386.4" cy="751.6" r="0.45" fill="#c8e0ff" opacity="0.52"/>
<circle cx="1398.2" cy="725.3" r="0.45" fill="#c8e0ff" opacity="0.39"/>
<circle cx="1380.0" cy="765.3" r="0.45" fill="#c8e0ff" opacity="0.37"/>
<circle cx="1365.9" cy="719.9" r="0.45" fill="#c8e0ff" opacity="0.67"/>
<circle cx="1401.5" cy="762.4" r="0.45" fill="#c8e0ff" opacity="0.85"/>
<circle cx="1389.2" cy="760.8" r="0.45" fill="#c8e0ff" opacity="0.36"/>
<circle cx="1409.0" cy="739.3" r="0.45" fill="#c8e0ff" opacity="0.60"/>
<circle cx="1410.0" cy="763.6" r="0.45" fill="#c8e0ff" opacity="0.52"/>
<circle cx="1408.9" cy="720.3" r="0.45" fill="#c8e0ff" opacity="0.32"/>
<circle cx="1392.7" cy="753.3" r="0.45" fill="#c8e0ff" opacity="0.79"/>
<circle cx="1395.4" cy="751.3" r="0.45" fill="#c8e0ff" opacity="0.34"/>
<circle cx="1380.9" cy="773.1" r="0.45" fill="#c8e0ff" opacity="0.56"/>
<circle cx="1397.2" cy="733.8" r="0.45" fill="#c8e0ff" opacity="0.88"/>
<circle cx="1396.0" cy="773.6" r="0.45" fill="#c8e0ff" opacity="0.63"/>
<circle cx="1401.1" cy="733.3" r="0.45" fill="#c8e0ff" opacity="0.34"/>
<circle cx="1371.2" cy="740.7" r="0.45" fill="#c8e0ff" opacity="0.64"/>
<circle cx="1376.8" cy="765.3" r="0.45" fill="#c8e0ff" opacity="0.82"/>
<circle cx="1402.3" cy="732.4" r="0.45" fill="#c8e0ff" opacity="0.64"/>
<circle cx="1366.2" cy="742.4" r="0.45" fill="#c8e0ff" opacity="0.50"/>
<circle cx="1395.3" cy="753.3" r="0.45" fill="#c8e0ff" opacity="0.61"/>
<circle cx="1370.2" cy="746.0" r="0.45" fill="#c8e0ff" opacity="0.50"/>
<circle cx="1385.3" cy="734.0" r="0.45" fill="#c8e0ff" opacity="0.80"/>
<circle cx="1381.0" cy="733.5" r="0.45" fill="#c8e0ff" opacity="0.45"/>
<circle cx="1415.3" cy="745.8" r="0.45" fill="#c8e0ff" opacity="0.66"/>
<circle cx="1397.9" cy="729.5" r="0.45" fill="#c8e0ff" opacity="0.56"/>
<circle cx="1390.6" cy="771.8" r="0.45" fill="#c8e0ff" opacity="0.81"/>
<circle cx="1409.1" cy="723.1" r="0.45" fill="#c8e0ff" opacity="0.63"/>
<circle cx="1372.0" cy="763.6" r="0.45" fill="#c8e0ff" opacity="0.31"/>
<circle cx="1379.2" cy="757.2" r="0.45" fill="#c8e0ff" opacity="0.52"/>
<circle cx="1402.9" cy="770.8" r="0.45" fill="#c8e0ff" opacity="0.54"/>
<circle cx="1374.6" cy="754.0" r="0.45" fill="#c8e0ff" opacity="0.48"/>
<circle cx="1409.1" cy="726.1" r="0.45" fill="#c8e0ff" opacity="0.69"/>
<circle cx="1394.1" cy="740.2" r="0.45" fill="#c8e0ff" opacity="0.84"/>
<circle cx="1417.7" cy="738.5" r="0.45" fill="#c8e0ff" opacity="0.71"/>
<circle cx="1375.8" cy="755.0" r="0.45" fill="#c8e0ff" opacity="0.64"/>
<circle cx="1418.7" cy="732.1" r="0.45" fill="#c8e0ff" opacity="0.70"/>
<circle cx="1387.0" cy="738.7" r="0.45" fill="#c8e0ff" opacity="0.53"/>
<circle cx="1372.7" cy="745.7" r="0.45" fill="#c8e0ff" opacity="0.50"/>
<circle cx="1395.6" cy="717.2" r="0.45" fill="#c8e0ff" opacity="0.35"/>
<circle cx="1402.6" cy="719.6" r="0.45" fill="#c8e0ff" opacity="0.64"/>
<circle cx="1374.5" cy="736.6" r="0.45" fill="#c8e0ff" opacity="0.77"/>
<circle cx="1414.1" cy="742.6" r="0.45" fill="#c8e0ff" opacity="0.50"/>
<circle cx="1398.1" cy="774.0" r="0.45" fill="#c8e0ff" opacity="0.83"/>
<circle cx="1375.1" cy="747.8" r="0.45" fill="#c8e0ff" opacity="0.41"/>
<circle cx="1369.9" cy="768.5" r="0.45" fill="#c8e0ff" opacity="0.62"/>
<circle cx="1391.3" cy="766.9" r="0.45" fill="#c8e0ff" opacity="0.61"/>
<circle cx="1372.9" cy="748.1" r="0.45" fill="#c8e0ff" opacity="0.89"/>
<circle cx="1409.7" cy="773.2" r="0.45" fill="#c8e0ff" opacity="0.47"/>
<circle cx="1369.5" cy="727.4" r="0.45" fill="#c8e0ff" opacity="0.85"/>
<circle cx="1417.2" cy="728.2" r="0.45" fill="#c8e0ff" opacity="0.58"/>
<circle cx="1389.2" cy="752.9" r="0.45" fill="#c8e0ff" opacity="0.77"/>
<circle cx="1370.2" cy="771.7" r="0.45" fill="#c8e0ff" opacity="0.54"/>
<circle cx="1378.2" cy="750.6" r="0.45" fill="#c8e0ff" opacity="0.58"/>
<circle cx="1388.1" cy="755.0" r="0.45" fill="#c8e0ff" opacity="0.35"/>
<circle cx="1389.7" cy="727.8" r="0.45" fill="#c8e0ff" opacity="0.34"/>
<circle cx="1396.6" cy="716.9" r="0.45" fill="#c8e0ff" opacity="0.81"/>
<circle cx="1407.1" cy="750.5" r="0.45" fill="#c8e0ff" opacity="0.68"/>
<circle cx="1397.3" cy="768.1" r="0.45" fill="#c8e0ff" opacity="0.59"/>
<circle cx="1373.1" cy="738.9" r="0.45" fill="#c8e0ff" opacity="0.84"/>
<circle cx="1390.5" cy="735.7" r="0.45" fill="#c8e0ff" opacity="0.40"/>
<circle cx="1369.9" cy="774.0" r="0.45" fill="#c8e0ff" opacity="0.77"/>
<circle cx="1401.5" cy="735.2" r="0.45" fill="#c8e0ff" opacity="0.56"/>
<circle cx="1375.7" cy="732.4" r="0.45" fill="#c8e0ff" opacity="0.71"/>
<circle cx="1367.6" cy="745.1" r="0.45" fill="#c8e0ff" opacity="0.60"/>
<circle cx="1367.1" cy="730.3" r="0.45" fill="#c8e0ff" opacity="0.75"/>
<circle cx="1416.9" cy="730.6" r="0.45" fill="#c8e0ff" opacity="0.46"/>
<circle cx="1388.7" cy="746.4" r="0.45" fill="#c8e0ff" opacity="0.57"/>
<circle cx="1390.7" cy="749.0" r="0.45" fill="#c8e0ff" opacity="0.85"/>
<circle cx="1402.9" cy="725.5" r="0.45" fill="#c8e0ff" opacity="0.37"/>
<circle cx="1405.9" cy="755.7" r="0.45" fill="#c8e0ff" opacity="0.72"/>
<circle cx="1376.5" cy="727.5" r="0.45" fill="#c8e0ff" opacity="0.70"/>
<circle cx="1375.3" cy="735.0" r="0.45" fill="#c8e0ff" opacity="0.74"/>

<circle cx="1382" cy="740" r="2.2" fill="#d8e8ff" filter="url(#t4b)"/>
<circle cx="1481" cy="741" r="1.8" fill="#5a7ad0" filter="url(#t4b)"/>
<!-- city skyline -->
<g fill="#8aa8d0" opacity="0.9">
 <rect x="1420" y="778" width="6" height="26"/><rect x="1427" y="786" width="8" height="18"/><rect x="1436" y="783" width="7" height="21"/><rect x="1444" y="790" width="6" height="14"/>
 <path d="M1464 800 L1467 778 L1470 800 Z"/><rect x="1471" y="784" width="8" height="20"/>
</g>
<g fill="#e8f4ff"><circle cx="1419" cy="790" r="2.2"/><circle cx="1424" cy="782" r="1.4"/><circle cx="1439" cy="787" r="1.2"/><circle cx="1467" cy="786" r="1.3"/><rect x="1410" y="792" width="8" height="3"/></g>
<g filter="url(#t4b)"><ellipse cx="1430" cy="796" rx="16" ry="6" fill="#9ab8e8" opacity="0.5"/></g>
<!-- left building -->
<path d="M1289 712 L1341 727 L1341 824 H1289 Z" fill="url(#t4wall)"/>
<path d="M1341 727 L1376 750 V822 H1341 Z" fill="#222c30"/>
<path d="M1341 733 L1376 752 V760 L1341 744 Z" fill="#161c20"/>
<g fill="#e0c070"><rect x="1298.5" y="736" width="7" height="24"/><rect x="1309.7" y="741.5" width="6.3" height="23.5"/></g>
<g fill="#e8eef0"><rect x="1324.6" y="748" width="5.7" height="21"/><rect x="1332.7" y="752" width="5" height="19"/><rect x="1341.5" y="731" width="1.8" height="16"/></g>
<path d="M1341.7 764 H1353.8 V816 H1341.7 Z" fill="#c8e4ec"/>
<path d="M1344 770 H1351 V814 H1344 Z" fill="#88b0c0"/>
<g fill="#4a7a90" opacity="0.8"><rect x="1292" y="775" width="10" height="4"/></g>
<!-- right side -->
<path d="M1480 776 L1494 772 V842 H1480 Z" fill="#0c1420"/>
<path d="M1494.7 781 L1508.5 776 V836 L1494.7 840 Z" fill="#9aacb0"/>
<path d="M1497 786 L1506 783 V832 L1497 835 Z" fill="#6a8890" opacity="0.7"/>
<path d="M1508.5 790 L1546 786 V836 L1508.5 838 Z" fill="#1c2a38"/>
<path d="M1512 806 C1514 796 1526 794 1530 800 L1527 805 C1524 800 1518 802 1518 812 C1518 822 1524 824 1528 818 L1531 823 C1526 832 1510 830 1512 812 Z" fill="#7a5a3a"/>
<path d="M1533 800 L1540 798 L1546 830 H1540 L1538 822 L1535 822 L1534 830 H1530 Z" fill="#6a5238"/>
<!-- street -->
<path d="M1289 824 L1341 817 L1376 816 L1440 810 L1480 838 L1546 844 V874 H1289 Z" fill="url(#t4st)"/>
<g filter="url(#t4b)">
 <path d="M1289 830 C1310 826 1330 824 1345 822 L1350 860 C1330 862 1310 864 1289 866 Z" fill="#4a7a88" opacity="0.55"/>
 <path d="M1340 820 L1352 820 L1350 850 L1342 850 Z" fill="#a8d0dc" opacity="0.6"/>
 <path d="M1398 814 C1408 812 1420 812 1426 816 L1432 860 C1420 864 1406 864 1394 860 Z" fill="#5a8a94" opacity="0.5"/>
 <path d="M1440 820 L1460 830 L1462 850 L1440 846 Z" fill="#4a7a84" opacity="0.4"/>
</g>
<g stroke="#8ab8c0" stroke-width="1.2" opacity="0.55">
 <path d="M1295 842 H1325 M1360 846 H1392 M1300 852 H1340 M1385 858 H1430 M1330 866 H1370 M1420 866 H1455 M1400 836 H1435 M1290 860 H1318 M1440 848 H1470"/>
</g>
<!-- city trucks -->
<path d="M1378 800 H1396 V814 H1378 Z M1400 796 H1418 V812 H1400 Z" fill="#141c22"/>
<path d="M1380 804 H1394 V810 H1380 Z" fill="#c8d8e0" opacity="0.8"/>
<g fill="#f0f0d8" opacity="0.85"><circle cx="1423" cy="786" r="1"/><circle cx="1430" cy="792" r="0.9"/><circle cx="1437" cy="784" r="0.8"/><circle cx="1445" cy="796" r="0.9"/><circle cx="1416" cy="798" r="0.8"/></g>
<!-- cars -->
<path d="M1322 810 C1328 804 1338 804 1344 810 L1346 824 H1320 Z" fill="#1a2428"/>
<path d="M1448 824 C1450 815 1458 813 1466 814 C1470 816 1472 822 1473 830 L1472 836 H1448 Z" fill="#7a8488"/>
<path d="M1452 818 H1466 L1468 824 H1450 Z" fill="#3a4448"/>
<path d="M1458 808 H1472 L1474 814 H1456 Z" fill="#8a969c"/>
<!-- boy -->
<path d="M1480 850 C1480 842 1486 838 1492 840 C1498 844 1499 860 1498 874 H1477 C1476 864 1477 856 1480 850 Z" fill="#3c5272"/>
<circle cx="1489" cy="837" r="3.8" fill="#1a2230"/>
<ellipse cx="1465" cy="868" rx="7" ry="3" fill="#0a1014"/>
</svg><!-- MENU -->
<div class="a" style="left:891px;top:670px;width:270px;height:245px;background:#242424;border:1px solid #505050;border-radius:8px;overflow:hidden;box-shadow:0 2px 6px rgba(0,0,0,0.4)">
  <div class="a" style="left:0;top:181px;width:270px;height:57px;background:#313131"></div>
</div>
<div class="t" style="left:914px;top:697px;font-size:20px;color:#e8e8e8">Rename</div>
<div class="t" style="left:914px;top:756px;font-size:20px;color:#e8e8e8;letter-spacing:0.37px">Duplicate</div>
<div class="t" style="left:914px;top:815px;font-size:20px;color:#e8e8e8;letter-spacing:0.4px">Delete</div>
<div class="t" style="left:914px;top:873px;font-size:20px;color:#e8e8e8;letter-spacing:0.42px">View version history</div>
<svg class="a" style="left:0;top:0" width="1600" height="1118"><circle cx="1076" cy="885.5" r="28" fill="rgba(70,110,160,0.55)" stroke="rgba(110,150,200,0.6)" stroke-width="1.2"/></svg>
<!-- TEXT -->
<div class="t" style="left:22px;top:8px;font-size:16px;font-weight:bold;color:#fff">11:53</div>
<div class="t" style="left:77px;top:8px;font-size:16px;font-weight:bold;color:#fff">2</div>
<div class="t" style="left:100px;top:8px;font-size:16px;font-weight:bold;color:#fff;letter-spacing:-0.5px">19</div>
<div class="t" style="left:135px;top:7px;font-size:16px;font-weight:bold;color:#fff">(</div>
<div class="t" style="left:156px;top:7px;font-size:16px;font-weight:bold;color:#fff">)</div>
<div class="t" style="left:1507px;top:8px;font-size:15.5px;font-weight:bold;color:#fff">97%</div>

<div class="t nav" style="left:75px;top:188px;color:#f4f4f4">Home</div>
<div class="t nav" style="left:75px;top:250px">Your work</div>
<div class="t nav" style="left:75px;top:309px;letter-spacing:-0.3px">Learn</div>
<div class="t nav" style="left:75px;top:370px;letter-spacing:-0.45px">Discover</div>
<div class="t nav" style="left:75px;top:973px;font-size:23px;letter-spacing:-0.25px">Create new</div>
<div class="t nav" style="left:75px;top:1036px;font-size:23px;letter-spacing:0.5px">Import and open</div>

<div class="t" style="left:417px;top:283px;font-size:20px;font-weight:bold;color:#fff;letter-spacing:0.17px">Start with your image</div>
<div class="t" style="left:417px;top:324px;font-size:18px;color:#dcdcdc;letter-spacing:0.2px">Select a photo from your device to</div>
<div class="t" style="left:417px;top:348px;font-size:18px;color:#dcdcdc;letter-spacing:0.2px">get started.</div>
<div class="t link" style="left:417px;top:397px;font-size:18px;letter-spacing:0.14px">Import and open</div>
<div class="t" style="left:1196px;top:392px;font-size:20px;font-weight:bold;color:#fff;letter-spacing:0.1px">New and upcoming features</div>
<div class="t link" style="left:1310px;top:439px;font-size:18px">View</div>

<div class="t" style="left:360px;top:574px;font-size:23px;font-weight:bold;color:#fff;letter-spacing:-1.05px">Recent</div>

<div class="t" style="left:359px;top:942px;font-size:21px;color:#ececec;letter-spacing:-0.16px">Ted Chin -...amingos (2)</div>
<div class="t" style="left:359px;top:975px;font-size:15px;color:#cfcfcf">2/19/21, 00:07</div>
<div class="t" style="left:665px;top:942px;font-size:21px;color:#ececec;letter-spacing:-0.16px">Frankie Ci...h to Believe</div>
<div class="t" style="left:665px;top:975px;font-size:15px;color:#cfcfcf;letter-spacing:-0.36px">2/16/21, 14:58</div>
<div class="t" style="left:972px;top:942px;font-size:21px;color:#ececec;letter-spacing:-0.67px">Temi Ps iPad</div>
<div class="t" style="left:972px;top:975px;font-size:15px;color:#cfcfcf;letter-spacing:-0.38px">1/20/21, 14:30</div>
<div class="t" style="left:1278px;top:942px;font-size:21px;color:#ececec;letter-spacing:-0.37px">dark LA</div>
<div class="t" style="left:1278px;top:975px;font-size:15px;color:#cfcfcf;letter-spacing:-0.44px">1/7/21, 16:53</div>

<div class="dots" style="left:602px;top:946px"><i style="left:0"></i><i style="left:7px"></i><i style="left:14px"></i></div>
<div class="dots" style="left:908px;top:946px"><i style="left:0"></i><i style="left:7px"></i><i style="left:14px"></i></div>
<div class="dots" style="left:1215px;top:946px"><i style="left:0"></i><i style="left:7px"></i><i style="left:14px"></i></div>
<div class="dots" style="left:1521px;top:946px"><i style="left:0"></i><i style="left:7px"></i><i style="left:14px"></i></div>

<!-- home indicator -->
<div class="a" style="left:589px;top:1100px;width:422px;height:8px;background:#fff;border-radius:4px"></div>
</body></html>
